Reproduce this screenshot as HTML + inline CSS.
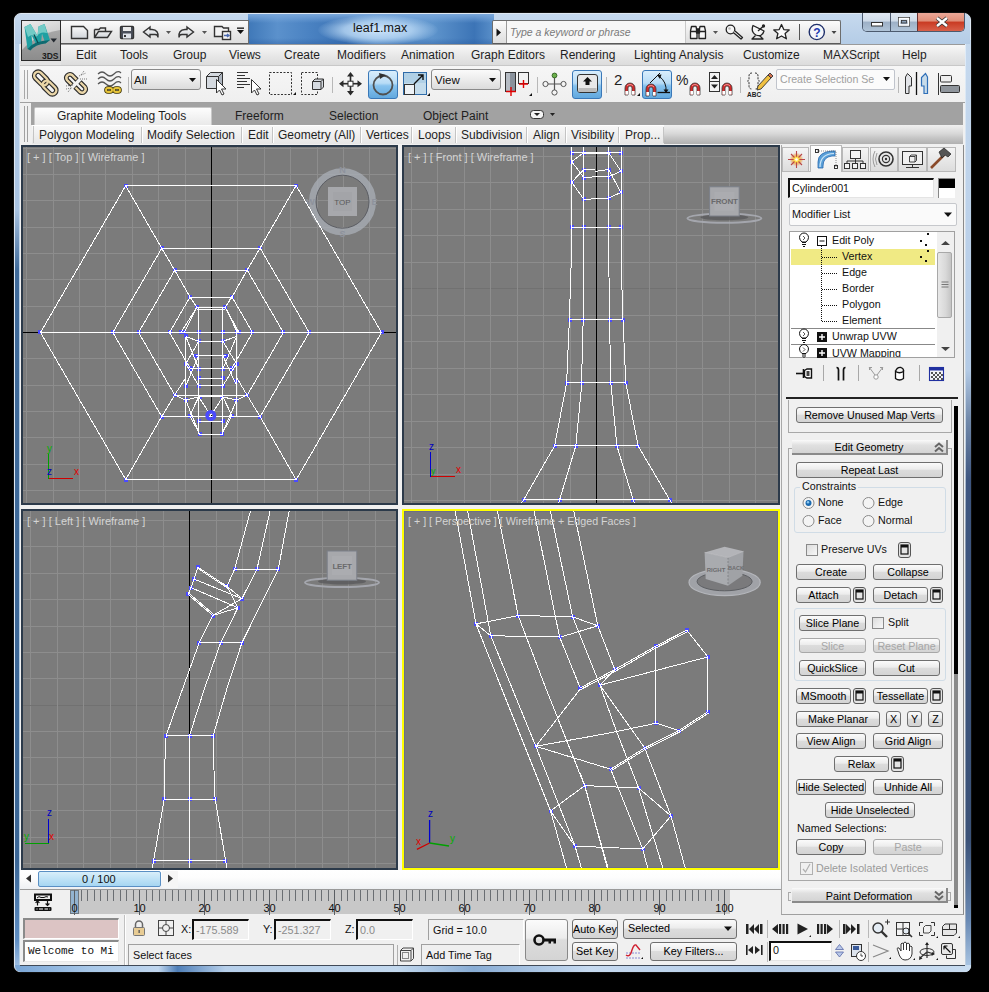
<!DOCTYPE html>
<html><head><meta charset="utf-8">
<style>
*{margin:0;padding:0;box-sizing:border-box}
html,body{width:989px;height:992px;overflow:hidden;background:#000;font-family:"Liberation Sans",sans-serif;font-size:12px;color:#1e1e1e}
.a{position:absolute}
svg.a{overflow:hidden}
#win{left:14px;top:13px;width:957px;height:959px;border-radius:7px 7px 6px 6px;background:#c4d8ee;border:1px solid #dfe8f2;box-shadow:0 0 0 0.5px #222}
#client{left:20px;top:44px;width:945px;height:921px;background:#f0f0f0}
.vp{background:#7b7b7b;border:2px solid #2c3a4a;overflow:hidden}
.vp.act{border:2px solid #ffff00}
.t{position:absolute;white-space:pre;line-height:1}
.btn{position:absolute;background:linear-gradient(#fbfbfb,#ececec 45%,#dcdcdc 50%,#d4d4d4);border:1px solid #6f6f6f;border-radius:3px;text-align:center;font-size:10.7px;color:#000;white-space:pre;line-height:14px}
.dis{color:#a6a6a6;border-color:#a8a8a8}
</style></head><body>
<div id="win" class="a"></div>
<div class="a" style="left:15px;top:40px;width:5px;height:926px;background:linear-gradient(#b9d0ea 0px,#a9c3e2 170px,#3f6a9a 230px,#3b6696 820px,#5f8ec4 900px,#9dbde2 926px)"></div>
<div class="a" style="left:19px;top:40px;width:1px;height:926px;background:linear-gradient(#e0ecf8,#b0c8e0 300px,#b8d0e4)"></div>
<div class="a" style="left:20px;top:44px;width:1px;height:921px;background:#2c3a4a"></div>
<div class="a" style="left:965px;top:40px;width:6px;height:926px;background:linear-gradient(#c6d9ee 0px,#b4cbe6 330px,#7189aa 380px,#3e5680 440px,#3b5278 800px,#6a8ab4 880px,#a8c4e2 926px)"></div>
<div class="a" style="left:965px;top:40px;width:1px;height:926px;background:linear-gradient(#e0ecf8,#c0d0e0 400px,#8a9ab0 500px,#8a9ab0 850px,#c0d0e0)"></div>
<div class="a" style="left:964px;top:44px;width:1px;height:921px;background:#404a58"></div>
<div class="a" style="left:15px;top:965px;width:956px;height:7px;border-radius:0 0 6px 6px;background:linear-gradient(90deg,#7aa6d6 0%,#a9c8e8 8%,#c0d6ee 15%,#4f7fb8 17%,#b6cfea 22%,#c2d8ee 40%,#88acd4 48%,#c6daf0 60%,#b4cce8 80%,#c8dcf0 100%)"></div>
<div class="a" style="left:20px;top:965px;width:945px;height:1px;background:#404a58"></div>
<div id="client" class="a"></div>
<!-- window frame detail -->
<div class="a" style="left:15px;top:14px;width:955px;height:30px;border-radius:6px 6px 0 0;background:linear-gradient(#c6d9ee,#b4cce6)"></div>
<!-- title glass area -->
<div class="a" style="left:248px;top:14px;width:246px;height:30px;background:linear-gradient(90deg,#3f78b8 0%,#5b91cc 12%,#4a82c2 25%,#3b72b4 40%,#6a9ed4 52%,#5e94cc 75%,#3c74b6 92%,#5a90ca 100%)"></div>
<div class="a" style="left:248px;top:14px;width:246px;height:30px;background:linear-gradient(#7aa8dc 0%,rgba(90,140,200,0) 30%,rgba(60,110,180,0) 80%,rgba(40,90,160,0.4) 100%)"></div>
<div class="a" style="left:318px;top:15px;width:120px;height:30px;border-radius:50%;background:radial-gradient(ellipse at center,rgba(205,228,250,1) 0%,rgba(180,212,242,0.85) 40%,rgba(120,170,220,0) 72%)"></div>
<div class="t" style="left:353px;top:22px;font-size:12.5px;color:#141414">leaf1.max</div>
<!-- logo -->
<div class="a" style="left:21px;top:20px;width:40px;height:41px;background:#2a2a2a"></div>
<svg class="a" style="left:22px;top:21px" width="38" height="39" viewBox="22 21 38 39">
<defs><linearGradient id="lg1" x1="0" y1="0" x2="0.3" y2="1"><stop offset="0" stop-color="#ececec"/><stop offset="0.5" stop-color="#d0d0d0"/><stop offset="1" stop-color="#b4b4b4"/></linearGradient>
<linearGradient id="lg2" x1="0" y1="0" x2="0" y2="1"><stop offset="0" stop-color="#a8a8a8"/><stop offset="1" stop-color="#8c8c8c"/></linearGradient></defs>
<rect x="22" y="21" width="38" height="39" fill="url(#lg1)"/>
<path d="M22 60 V50 Q36 34 60 30 V60 Z" fill="url(#lg2)"/>
<path d="M24.5 27 L30.5 24 L37.5 36 L38.5 26.5 L44.5 24 L50 40 L45.5 43.5 L42 34 L41 43 L36.5 45 L31.5 35 L32.5 46 L27.5 49 Z" fill="#1fa0a2"/>
<path d="M24.5 27 L30.5 24 L37.5 36 L38.5 26.5 L44.5 24 L47 33 Q40 31 36 37 L31.5 35 L28 37 Z" fill="#72cbc6"/>
<path d="M27.5 49 Q33 41 50 40 L45.5 43.5 Q36 44 30.5 50.5 Z" fill="#0f6a70"/>
<path d="M34 34.5 L38 43" stroke="#0b4a50" stroke-width="1.3"/>
<path d="M50.5 38.5 H57 L53.7 42.5 Z" fill="#22282f"/>
<text x="42" y="58.5" font-size="8.5" font-weight="bold" fill="#1c1c1c" font-family="Liberation Sans">3DS</text>
</svg>
<!-- quick access toolbar -->
<div class="a" style="left:61px;top:20px;width:188px;height:25px;background:linear-gradient(#fbfbfb,#eaeaea 50%,#dedede);border:1px solid #6d6d6d;border-left:none;border-bottom:2px solid #5a5a5a"></div>
<svg class="a" style="left:62px;top:21px" width="186" height="22" viewBox="62 21 186 22">
<defs><linearGradient id="qg" x1="0" y1="0" x2="0" y2="1"><stop offset="0" stop-color="#fafafa"/><stop offset="1" stop-color="#cfd3d8"/></linearGradient></defs>
<g fill="none" stroke="#333" stroke-width="1.4">
<path d="M71.5 26.5 H83.5 L87.5 30.5 V38.5 H71.5 Z" fill="url(#qg)"/>
<path d="M94.5 29.5 H99 L100.5 28 H105.5 V31.5" fill="#e8e8e8"/><path d="M94.5 29.5 V37.5 H107.5 L111.5 31.5 H98.5 L94.5 37.5" fill="url(#qg)"/>
<rect x="120.5" y="26.5" width="13" height="12" rx="1" fill="#4a4f5a"/><rect x="123" y="27" width="8" height="4" fill="#eaeaea" stroke="none"/><rect x="123" y="33.5" width="8" height="5" fill="#dfe3ea" stroke="none"/><rect x="124" y="35" width="2" height="2" fill="#333" stroke="none"/>
<path d="M150 27 L143.5 32 L150 37 V34.5 H155 Q158 34.5 158 37.5 Q159 30 152 29.5 H150 Z" fill="url(#qg)" stroke-width="1.4"/>
<path d="M187 27 L193.5 32 L187 37 V34.5 H182 Q179 34.5 179 37.5 Q178 30 185 29.5 H187 Z" fill="url(#qg)" stroke-width="1.4"/>
<path d="M214.5 26.5 H222 L223.5 28 H228.5 V36.5 H214.5 Z" fill="#f2f2f2"/><rect x="222.5" y="31.5" width="8" height="8" fill="#f4f4f4"/><path d="M224 35.5 H229 M227 34 L229 35.5 L227 37" stroke="#4a6ab0"/>
</g>
<g fill="#555"><path d="M166 31 h5 l-2.5 3z"/><path d="M202 31 h5 l-2.5 3z"/><path d="M237 30 h7 l-3.5 4z" fill="#111"/><rect x="237" y="27.5" width="7" height="1.3" fill="#111"/></g>
</svg>
<!-- InfoCenter -->
<div class="a" style="left:492px;top:20px;width:349px;height:25px;background:linear-gradient(#fbfbfb,#ececec 50%,#dedede);border:1px solid #6d6d6d;border-bottom:2px solid #5a5a5a;border-radius:2px 2px 0 0"></div>
<div class="a" style="left:506px;top:21px;width:180px;height:22px;background:#f7f7f7;border-left:1px solid #9a9a9a;border-right:1px solid #c8c8c8"></div>
<svg class="a" style="left:496px;top:28px" width="6" height="9"><path d="M0.5 0.5 L5 4.5 L0.5 8.5Z" fill="#111"/></svg>
<div class="t" style="left:510px;top:27px;font-size:10.5px;font-style:italic;color:#7a7a7a">Type a keyword or phrase</div>
<svg class="a" style="left:688px;top:21px" width="150" height="22" viewBox="688 21 150 22">
<g fill="#f6f6f6" stroke="#222" stroke-width="1.3" stroke-linejoin="round">
<path d="M690.5 31 L691.5 26.5 H696 L697 31 V38.5 H690.5 Z"/><path d="M699 31 L700 26.5 H704.5 L705.5 31 V38.5 H699 Z"/><rect x="696.5" y="29" width="3" height="4" fill="#222"/>
<path d="M690.8 31.5 H697 M699 31.5 H705.3" fill="none"/>
<circle cx="730.5" cy="29.5" r="4.3"/><path d="M733.3 32.5 L741 39 L742.5 37.5 L735 31" />
<circle cx="729.5" cy="28.5" r="1.3" fill="#bbb" stroke="none"/>
<path d="M753 25.5 Q750.5 32 756 35 Q762 37.5 764 31 Z"/><path d="M758 31 L763 26.5" fill="none"/><circle cx="763.5" cy="26" r="1" fill="#222"/><path d="M755.5 35.5 L752 39 H763 L759.5 35.5" fill="none"/>
<path d="M781.5 24.5 L783.8 29.6 L789.2 30 L785.1 33.5 L786.4 38.8 L781.5 36 L776.6 38.8 L777.9 33.5 L773.8 30 L779.2 29.6 Z" fill="#fbfbfb"/>
</g>
<path d="M713 31 h5 l-2.5 3z" fill="#555"/>
<line x1="799.5" y1="24" x2="799.5" y2="40" stroke="#555"/>
<circle cx="816.8" cy="32" r="7.6" fill="#f4f6fb" stroke="#1f2f6a" stroke-width="1.4"/>
<text x="816.8" y="36.5" font-size="12" font-weight="bold" fill="#1f3ab0" text-anchor="middle">?</text>
<path d="M831.5 31 h5 l-2.5 3z" fill="#444"/>
</svg>
<!-- window controls -->
<div class="a" style="left:862px;top:13px;width:103px;height:19px;border:1px solid #4c5a6e;border-top:none;border-radius:0 0 5px 5px;overflow:hidden">
 <div class="a" style="left:0;top:0;width:28px;height:18px;background:linear-gradient(#e0e8f2 0%,#cfdbe8 45%,#9db0c6 50%,#b0c4d8 100%);border-right:1px solid #4c5a6e"></div>
 <div class="a" style="left:28px;top:0;width:27px;height:18px;background:linear-gradient(#e0e8f2 0%,#cfdbe8 45%,#9db0c6 50%,#b0c4d8 100%);border-right:1px solid #6a3030"></div>
 <div class="a" style="left:55px;top:0;width:48px;height:18px;background:linear-gradient(#eba898 0%,#e08e78 45%,#c93a22 50%,#d8604a 100%)"></div>
</div>
<svg class="a" style="left:862px;top:13px" width="103" height="19" viewBox="862 13 103 19">
<rect x="871.5" y="22.5" width="11" height="3.5" fill="#fff" stroke="#333" stroke-width="1"/>
<rect x="898.5" y="17.5" width="11" height="8.5" fill="none" stroke="#333" stroke-width="1"/><rect x="899.5" y="18.5" width="9" height="6.5" fill="none" stroke="#fff" stroke-width="1.6"/><rect x="901.5" y="20.5" width="5" height="2.5" fill="#8aa0b8" stroke="#333" stroke-width="0.8"/>
<path d="M937 18 L947 26 M947 18 L937 26" stroke="#333" stroke-width="4"/><path d="M937 18 L947 26 M947 18 L937 26" stroke="#fff" stroke-width="2.4"/>
</svg>
<!-- menu bar -->
<div class="a" style="left:61px;top:44px;width:904px;height:21px;background:linear-gradient(#f8f8f8,#e6e6e6 60%,#dcdcdc);border-top:1px solid #9a9a9a"></div>
<div class="a" style="left:20px;top:61px;width:41px;height:4px;background:#e4e4e4"></div>
<div class="t" style="left:76px;top:49px">Edit</div>
<div class="t" style="left:120px;top:49px">Tools</div>
<div class="t" style="left:173px;top:49px">Group</div>
<div class="t" style="left:229px;top:49px">Views</div>
<div class="t" style="left:284px;top:49px">Create</div>
<div class="t" style="left:337px;top:49px">Modifiers</div>
<div class="t" style="left:401px;top:49px">Animation</div>
<div class="t" style="left:471px;top:49px">Graph Editors</div>
<div class="t" style="left:560px;top:49px">Rendering</div>
<div class="t" style="left:634px;top:49px">Lighting Analysis</div>
<div class="t" style="left:743px;top:49px">Customize</div>
<div class="t" style="left:823px;top:49px">MAXScript</div>
<div class="t" style="left:902px;top:49px">Help</div>
<div class="a" style="left:20px;top:65px;width:945px;height:38px;background:linear-gradient(#f6f6f6,#efefef);border-top:1px solid #c8c8c8;border-bottom:1px solid #a0a0a0"></div>
<div class="a" style="left:131px;top:69px;width:70px;height:21px;border:1px solid #8a8a8a;border-radius:3px;background:linear-gradient(#fafafa,#ececec 50%,#dcdcdc)"></div>
<div class="t" style="left:134px;top:75px;font-size:11.5px;color:#111">All</div>
<div class="a" style="left:431px;top:69px;width:70px;height:21px;border:1px solid #8a8a8a;border-radius:3px;background:linear-gradient(#fafafa,#ececec 50%,#dcdcdc)"></div>
<div class="t" style="left:435px;top:75px;font-size:11.5px;color:#111">View</div>
<div class="a" style="left:776px;top:69px;width:119px;height:21px;border:1px solid #c0c4cc;border-radius:2px;background:#fbfbfb"></div>
<div class="t" style="left:780px;top:74px;font-size:10.6px;color:#a0a0a0">Create Selection Se</div>
<div class="a" style="left:368px;top:70px;width:30px;height:29px;border:1px solid #3a78b8;border-radius:3px;background:linear-gradient(#d9eefc,#b8dcf6 45%,#86c2ee 55%,#62a8de)"></div>
<div class="a" style="left:572px;top:70px;width:30px;height:29px;border:1px solid #3a78b8;border-radius:3px;background:linear-gradient(#d9eefc,#b8dcf6 45%,#86c2ee 55%,#62a8de)"></div>
<div class="a" style="left:642px;top:70px;width:30px;height:29px;border:1px solid #3a78b8;border-radius:3px;background:linear-gradient(#d9eefc,#b8dcf6 45%,#86c2ee 55%,#62a8de)"></div>
<svg class="a" style="left:20px;top:65px" width="945" height="38" viewBox="20 65 945 38">
<g stroke="#a8a8a8"><line x1="24.5" y1="70" x2="24.5" y2="99"/><line x1="27.5" y1="70" x2="27.5" y2="99"/></g>
<g stroke="#b8b8b8"><line x1="128.5" y1="77" x2="128.5" y2="93"/><line x1="332.5" y1="77" x2="332.5" y2="93"/><line x1="537.5" y1="77" x2="537.5" y2="93"/><line x1="606.5" y1="77" x2="606.5" y2="93"/><line x1="740.5" y1="77" x2="740.5" y2="93"/><line x1="898.5" y1="77" x2="898.5" y2="93"/></g>
<!-- link -->
<g fill="none">
<g stroke="#2a2a2a" stroke-width="4.6"><rect x="33" y="74.5" width="16" height="8" rx="4" transform="rotate(45 41 78.5)"/><rect x="41.5" y="83.5" width="16" height="8" rx="4" transform="rotate(45 49.5 87.5)"/></g>
<g stroke="#ead6a8" stroke-width="2.4"><rect x="33" y="74.5" width="16" height="8" rx="4" transform="rotate(45 41 78.5)"/><rect x="41.5" y="83.5" width="16" height="8" rx="4" transform="rotate(45 49.5 87.5)"/></g>
<!-- unlink -->
<g stroke="#2a2a2a" stroke-width="4.6" stroke-linecap="butt"><path d="M77 80 L72 75 A3.6 3.6 0 0 0 67 80 L72 85"/><path d="M75 87 L80 92 A3.6 3.6 0 0 0 85 87 L80 82"/></g>
<g stroke="#ead6a8" stroke-width="2.4" stroke-linecap="butt"><path d="M76.5 79.5 L72 75 A3.6 3.6 0 0 0 67 80 L71.5 84.5"/><path d="M75.5 87.5 L80 92 A3.6 3.6 0 0 0 85 87 L80.5 82.5"/></g>
</g>
<g stroke="#444" stroke-width="0.7" stroke-dasharray="1 1"><path d="M79 76 L86 73 M80 79 L87 79 M81 75 L84 71 M66 86 L73 85 M66 89 L72 88 M68 92 L72 87"/></g>
<!-- bind spacewarp -->
<g fill="none" stroke="#555" stroke-width="1.2"><path d="M98 74 Q102 70 106 74 T114 74 T121 73"/><path d="M98 79 Q102 75 106 79 T114 79 T121 78"/><path d="M98 84 Q102 80 106 84 T114 84 T121 83"/></g>
<g fill="none" stroke="#3a3000" stroke-width="3.6"><rect x="106" y="88" width="6" height="4" rx="2"/><rect x="114" y="88" width="6" height="4" rx="2"/></g>
<g fill="none" stroke="#e5c33a" stroke-width="2"><rect x="106" y="88" width="6" height="4" rx="2"/><rect x="114" y="88" width="6" height="4" rx="2"/></g>
<!-- dropdown arrows -->
<g fill="#111"><path d="M189 78 h7 l-3.5 4z"/><path d="M489 78 h7 l-3.5 4z"/><path d="M883 77 h7 l-3.5 4z"/></g>
<!-- select object -->
<g stroke="#333" stroke-width="1" stroke-linejoin="round">
<path d="M206.5 76.5 L210.5 72.5 H222.5 V85.5 L218.5 88.5 H206.5 Z" fill="#d5dae0"/><path d="M206.5 76.5 H218.5 V88.5 M218.5 76.5 L222.5 72.5" fill="none"/><path d="M218.5 76.5 L222.5 72.5 V85.5 L218.5 88.5 Z" fill="#aeb6c0"/>
<path d="M216.5 79.5 V93 L219.5 90 L222 95 L224 94 L221.5 89 H226 Z" fill="#fff"/>
</g>
<!-- select by name -->
<g stroke="#333" stroke-width="1.2"><path d="M237 72.5 H248 M237 75.5 H245 M237 78.5 H250 M237 81.5 H247 M237 84.5 H250 M237 87.5 H244"/></g>
<path d="M251.5 79.5 V93 L254.5 90 L257 95 L259 94 L256.5 89 H261 Z" fill="#fff" stroke="#333" stroke-linejoin="round"/>
<!-- rect selection -->
<rect x="269.5" y="72.5" width="22" height="22" fill="none" stroke="#333" stroke-dasharray="2 1.5"/>
<path d="M293 95 h3 v-3z" fill="#111"/>
<!-- window crossing -->
<rect x="301.5" y="72.5" width="16" height="22" fill="none" stroke="#333" stroke-dasharray="2 1.5"/>
<g stroke="#333" stroke-linejoin="round"><path d="M312.5 81.5 L315 79 H323.5 V87 L321 89.5 H312.5 Z" fill="#d5dae0"/><path d="M312.5 81.5 H321 V89.5 M321 81.5 L323.5 79" fill="none"/></g>
<!-- move -->
<g fill="#2a2a2a"><path d="M350.5 72 L354 76.5 H347 Z M350.5 95.5 L354 91 H347 Z M339 83.7 L343.5 80.2 V87.2 Z M362 83.7 L357.5 80.2 V87.2 Z"/><rect x="349.7" y="76" width="1.6" height="15"/><rect x="343" y="82.9" width="15" height="1.6"/></g>
<rect x="348" y="81.2" width="5" height="5" fill="#fff" stroke="#2a2a2a"/>
<!-- rotate -->
<circle cx="383" cy="85" r="9.5" fill="none" stroke="#505050" stroke-width="1.8"/>
<path d="M379 73 L386 75 L380 79 Z" fill="#303030"/>
<!-- scale -->
<rect x="403.5" y="72.5" width="23" height="22" fill="#c4dcec" stroke="#2f6ba8"/>
<rect x="404" y="73" width="22" height="10" fill="#b0d0e6"/>
<rect x="404.5" y="84.5" width="10" height="10" fill="#eef2f6" stroke="#333"/>
<path d="M414 84 L423 75 M418 75 H423 V80" fill="none" stroke="#111" stroke-width="1.4"/>
<path d="M427 96 h3 v-3z" fill="#111"/>
<!-- pivot -->
<rect x="505.5" y="72.5" width="10" height="19" fill="#8a929c" stroke="#333"/><rect x="506" y="73" width="4" height="18" fill="#b6bcc4"/>
<rect x="518.5" y="72.5" width="10" height="11" fill="#f2f2f2" stroke="#333"/>
<g stroke="#e00000" stroke-width="1.4"><path d="M506 91.5 H516 M511 87 V96"/><path d="M519 84 H528 M523.5 80 V88"/></g>
<path d="M529 96 h3 v-3z" fill="#111"/>
<!-- manipulate -->
<g stroke="#555" stroke-width="1.2"><path d="M554.5 77 V92 M545 84 H564"/></g>
<circle cx="554.5" cy="75.5" r="2.4" fill="#6ab04a" stroke="#3a6a2a"/><g fill="#f4f4f4" stroke="#555"><circle cx="545.5" cy="84" r="2.6"/><circle cx="563.5" cy="84" r="2.6"/><circle cx="554.5" cy="92.5" r="2.6"/></g>
<!-- keyboard override -->
<rect x="577.5" y="74.5" width="20" height="18" rx="2.5" fill="#e8e8e8" stroke="#333"/><rect x="578.5" y="88" width="18" height="4" fill="#bcbcbc"/>
<path d="M587.5 77 L592 81.5 H589.5 V85 H585.5 V81.5 H583 Z" fill="#111"/>
<!-- snaps -->
<text x="614" y="85" font-size="15" fill="#222" font-family="Liberation Sans">2</text>
<path d="M625 95 V88 A5 5 0 0 1 635 88 V95 H632 V88 A2 2 0 0 0 628 88 V95 Z" fill="#d42a2a" stroke="#3a3a3a" stroke-width="0.8"/><path d="M627 86 A3.8 3.8 0 0 1 633 86" fill="none" stroke="#f4a0a0" stroke-width="0.9"/><rect x="625.4" y="91" width="2.6" height="3.6" fill="#fff"/><rect x="632" y="91" width="2.6" height="3.6" fill="#fff"/><path d="M646 96 V89 A5 5 0 0 1 656 89 V96 H653 V89 A2 2 0 0 0 649 89 V96 Z" fill="#d42a2a" stroke="#3a3a3a" stroke-width="0.8"/><path d="M648 87 A3.8 3.8 0 0 1 654 87" fill="none" stroke="#f4a0a0" stroke-width="0.9"/><rect x="646.4" y="92" width="2.6" height="3.6" fill="#fff"/><rect x="653" y="92" width="2.6" height="3.6" fill="#fff"/><path d="M690 95 V88 A5 5 0 0 1 700 88 V95 H697 V88 A2 2 0 0 0 693 88 V95 Z" fill="#d42a2a" stroke="#3a3a3a" stroke-width="0.8"/><path d="M692 86 A3.8 3.8 0 0 1 698 86" fill="none" stroke="#f4a0a0" stroke-width="0.9"/><rect x="690.4" y="91" width="2.6" height="3.6" fill="#fff"/><rect x="697" y="91" width="2.6" height="3.6" fill="#fff"/><path d="M722 95 V88 A5 5 0 0 1 732 88 V95 H729 V88 A2 2 0 0 0 725 88 V95 Z" fill="#d42a2a" stroke="#3a3a3a" stroke-width="0.8"/><path d="M724 86 A3.8 3.8 0 0 1 730 86" fill="none" stroke="#f4a0a0" stroke-width="0.9"/><rect x="722.4" y="91" width="2.6" height="3.6" fill="#fff"/><rect x="729" y="91" width="2.6" height="3.6" fill="#fff"/>
<path d="M637 96 h3 v-3z" fill="#111"/>
<path d="M650 83 L660 73" fill="none" stroke="#111" stroke-width="1"/><path d="M659 76 Q667 82 666 92" fill="none" stroke="#111" stroke-width="1"/><path d="M657.5 92.5 H670" stroke="#111" stroke-width="1.3"/><path d="M657 75 L661.5 74.5 L660 79Z M663.5 89.5 L666 93 L668.5 89.5Z" fill="#111"/>
<text x="676" y="85" font-size="14" fill="#222" font-family="Liberation Sans">%</text>
<rect x="709.5" y="72.5" width="10" height="19" fill="#f4f4f4" stroke="#333"/><path d="M711 79 L714.5 75 L718 79 Z M711 84.5 L714.5 88.5 L718 84.5 Z" fill="#222"/><line x1="710" y1="81.5" x2="719" y2="81.5" stroke="#333"/>
<!-- edit named sel -->
<path d="M752 73 Q749 73 749 76 V79 Q749 81 747.5 81 Q749 81 749 83 V86 Q749 89 752 89 M755 73 Q758 73 758 76 V79 Q758 81 759.5 81 Q758 81 758 83 V86 Q758 89 755 89" fill="none" stroke="#333" stroke-dasharray="2 1"/>
<path d="M758 86 L768 75 L771 78 L761 89 L757 90 Z" fill="#f0c040" stroke="#333" stroke-width="0.9"/><path d="M768 75 L770 73 L773 76 L771 78Z" fill="#d07050" stroke="#333" stroke-width="0.9"/>
<text x="747" y="97" font-size="6.5" font-weight="bold" fill="#222" font-family="Liberation Sans">ABC</text>
<!-- mirror -->
<path d="M905.5 77 L907.5 73.5 L911.5 77.5 V86 H909 V93.5 H905.5 Z" fill="#e2e4e8" stroke="#333"/>
<line x1="916.5" y1="72" x2="916.5" y2="95" stroke="#111" stroke-width="1.3"/>
<path d="M927.5 77 L925.5 73.5 L921.5 77.5 V86 H924 V93.5 H927.5 Z" fill="#c8dcea" stroke="#2f6fb8" stroke-width="1.2"/>
<!-- align -->
<line x1="938.5" y1="73" x2="938.5" y2="95" stroke="#333"/><rect x="940.5" y="75.5" width="11" height="6.5" rx="1" fill="#eeeeee" stroke="#333"/><rect x="940.5" y="85.5" width="19" height="7" rx="1" fill="#8f959c" stroke="#333"/>
</svg>
<div class="a" style="left:20px;top:103px;width:945px;height:42px;background:#f0f0f0"></div>
<div class="a" style="left:31px;top:103px;width:932px;height:22px;background:#a2a2a2"></div>
<div class="a" style="left:34px;top:107px;width:178px;height:19px;background:linear-gradient(#fdfdfd,#e8e8e8);border:1px solid #c8c8c8;border-bottom:none;border-radius:2px 2px 0 0"></div>
<div class="t" style="left:57px;top:110px">Graphite Modeling Tools</div>
<div class="t" style="left:235px;top:110px">Freeform</div>
<div class="t" style="left:329px;top:110px">Selection</div>
<div class="t" style="left:423px;top:110px">Object Paint</div>
<svg class="a" style="left:528px;top:108px" width="30" height="14" viewBox="0 0 30 14">
<rect x="2.5" y="2.5" width="13" height="8" rx="3" fill="#f4f4f4" stroke="#333"/><path d="M6 5 h6 l-3 3z" fill="#222"/><path d="M22 5 h5 l-2.5 3z" fill="#222"/>
</svg>
<div class="a" style="left:32px;top:125px;width:931px;height:19px;background:linear-gradient(#f8f8f8,#e6e6e6);border-top:1px solid #fff"></div>
<div class="a" style="left:664px;top:125px;width:299px;height:19px;background:linear-gradient(#f0f0f0,#d8d8d8 45%,#c4c4c4 70%,#b0b0b0)"></div>
<svg class="a" style="left:20px;top:103px" width="945" height="42" viewBox="20 103 945 42">
<g stroke="#a0a0a0"><line x1="24.5" y1="106" x2="24.5" y2="142"/><line x1="27.5" y1="106" x2="27.5" y2="142"/></g>
<g stroke="#c4c4c4"><line x1="33.5" y1="126" x2="33.5" y2="143"/><line x1="141.5" y1="127" x2="141.5" y2="143"/><line x1="241.5" y1="127" x2="241.5" y2="143"/><line x1="272.5" y1="127" x2="272.5" y2="143"/><line x1="360.5" y1="127" x2="360.5" y2="143"/><line x1="411.5" y1="127" x2="411.5" y2="143"/><line x1="455.5" y1="127" x2="455.5" y2="143"/><line x1="526.5" y1="127" x2="526.5" y2="143"/><line x1="565.5" y1="127" x2="565.5" y2="143"/><line x1="618.5" y1="127" x2="618.5" y2="143"/><line x1="663.5" y1="127" x2="663.5" y2="143"/></g>
<g stroke="#fff"><line x1="142.5" y1="127" x2="142.5" y2="143"/><line x1="242.5" y1="127" x2="242.5" y2="143"/><line x1="273.5" y1="127" x2="273.5" y2="143"/><line x1="361.5" y1="127" x2="361.5" y2="143"/><line x1="412.5" y1="127" x2="412.5" y2="143"/><line x1="456.5" y1="127" x2="456.5" y2="143"/><line x1="527.5" y1="127" x2="527.5" y2="143"/><line x1="566.5" y1="127" x2="566.5" y2="143"/><line x1="619.5" y1="127" x2="619.5" y2="143"/></g>
</svg>
<div class="t" style="left:39px;top:129px">Polygon Modeling</div>
<div class="t" style="left:147px;top:129px">Modify Selection</div>
<div class="t" style="left:248px;top:129px">Edit</div>
<div class="t" style="left:278px;top:129px">Geometry (All)</div>
<div class="t" style="left:366px;top:129px">Vertices</div>
<div class="t" style="left:418px;top:129px">Loops</div>
<div class="t" style="left:461px;top:129px">Subdivision</div>
<div class="t" style="left:533px;top:129px">Align</div>
<div class="t" style="left:571px;top:129px">Visibility</div>
<div class="t" style="left:625px;top:129px">Prop...</div>
<div class="a vp" style="left:21px;top:145px;width:377px;height:360px"></div><div class="a vp" style="left:402px;top:145px;width:378px;height:360px"></div><div class="a vp" style="left:21px;top:509px;width:377px;height:361px"></div><div class="a vp act" style="left:402px;top:509px;width:378px;height:361px"></div><svg class="a" style="left:23px;top:147px" width="373" height="356" viewBox="23 147 373 356"><rect x="23" y="147" width="373" height="356" fill="#7b7b7b"/><g stroke="#8d8d8d" stroke-width="1" shape-rendering="crispEdges"><line x1="26.5" y1="147" x2="26.5" y2="503"/><line x1="23" y1="148.5" x2="396" y2="148.5"/><line x1="53.5" y1="147" x2="53.5" y2="503"/><line x1="23" y1="174.5" x2="396" y2="174.5"/><line x1="79.5" y1="147" x2="79.5" y2="503"/><line x1="23" y1="200.5" x2="396" y2="200.5"/><line x1="105.5" y1="147" x2="105.5" y2="503"/><line x1="23" y1="227.5" x2="396" y2="227.5"/><line x1="132.5" y1="147" x2="132.5" y2="503"/><line x1="23" y1="253.5" x2="396" y2="253.5"/><line x1="158.5" y1="147" x2="158.5" y2="503"/><line x1="23" y1="279.5" x2="396" y2="279.5"/><line x1="185.5" y1="147" x2="185.5" y2="503"/><line x1="23" y1="306.5" x2="396" y2="306.5"/><line x1="211.5" y1="147" x2="211.5" y2="503"/><line x1="23" y1="332.5" x2="396" y2="332.5"/><line x1="237.5" y1="147" x2="237.5" y2="503"/><line x1="23" y1="358.5" x2="396" y2="358.5"/><line x1="264.5" y1="147" x2="264.5" y2="503"/><line x1="23" y1="385.5" x2="396" y2="385.5"/><line x1="290.5" y1="147" x2="290.5" y2="503"/><line x1="23" y1="411.5" x2="396" y2="411.5"/><line x1="317.5" y1="147" x2="317.5" y2="503"/><line x1="23" y1="437.5" x2="396" y2="437.5"/><line x1="343.5" y1="147" x2="343.5" y2="503"/><line x1="23" y1="464.5" x2="396" y2="464.5"/><line x1="369.5" y1="147" x2="369.5" y2="503"/><line x1="23" y1="490.5" x2="396" y2="490.5"/></g><g stroke="#000" stroke-width="1.2" shape-rendering="crispEdges"><line x1="211.5" y1="147" x2="211.5" y2="503"/><line x1="23" y1="332.5" x2="396" y2="332.5"/></g><circle cx="342.5" cy="201.7" r="30" fill="none" stroke="#a8acb4" stroke-width="7" opacity="0.8"/><circle cx="342.5" cy="201.7" r="26.5" fill="none" stroke="#5c5e64" stroke-width="1"/><rect x="328" y="187" width="29" height="29" fill="#a7a8ac"/><rect x="333" y="192" width="19" height="19" fill="#a3a4a8"/><text x="342.5" y="205" font-size="8" fill="#5a5a5a" text-anchor="middle">TOP</text><g font-size="9" font-weight="bold" fill="#8e929c" text-anchor="middle"><text x="342.5" y="173">N</text><text x="342.5" y="237">S</text><text x="310.5" y="205">W</text><text x="374.5" y="205">E</text></g><g fill="#4a4aff" shape-rendering="crispEdges"><rect x="124" y="184" width="4" height="4"/><rect x="294" y="184" width="4" height="4"/><rect x="380" y="330" width="4" height="4"/><rect x="294" y="478" width="4" height="4"/><rect x="124" y="478" width="4" height="4"/><rect x="38" y="330" width="4" height="4"/><rect x="160" y="246" width="4" height="4"/><rect x="258" y="246" width="4" height="4"/><rect x="307" y="330" width="4" height="4"/><rect x="258" y="415" width="4" height="4"/><rect x="160" y="415" width="4" height="4"/><rect x="111" y="330" width="4" height="4"/><rect x="173" y="268" width="4" height="4"/><rect x="245" y="268" width="4" height="4"/><rect x="281" y="330" width="4" height="4"/><rect x="245" y="393" width="4" height="4"/><rect x="173" y="393" width="4" height="4"/><rect x="137" y="330" width="4" height="4"/><rect x="188" y="295" width="4" height="4"/><rect x="230" y="295" width="4" height="4"/><rect x="250" y="330" width="4" height="4"/><rect x="230" y="366" width="4" height="4"/><rect x="188" y="366" width="4" height="4"/><rect x="168" y="330" width="4" height="4"/><rect x="195" y="305" width="4" height="4"/><rect x="223" y="305" width="4" height="4"/><rect x="179" y="330" width="4" height="4"/><rect x="182" y="330" width="4" height="4"/><rect x="197" y="330" width="4" height="4"/><rect x="221" y="330" width="4" height="4"/><rect x="235" y="330" width="4" height="4"/><rect x="237" y="330" width="4" height="4"/><rect x="184" y="334" width="4" height="4"/><rect x="197" y="339" width="4" height="4"/><rect x="221" y="339" width="4" height="4"/><rect x="194" y="354" width="4" height="4"/><rect x="224" y="354" width="4" height="4"/><rect x="184" y="362" width="4" height="4"/><rect x="235" y="362" width="4" height="4"/><rect x="189" y="367" width="4" height="4"/><rect x="197" y="367" width="4" height="4"/><rect x="221" y="367" width="4" height="4"/><rect x="230" y="367" width="4" height="4"/><rect x="197" y="376" width="4" height="4"/><rect x="221" y="376" width="4" height="4"/><rect x="234" y="379" width="4" height="4"/><rect x="184" y="384" width="4" height="4"/><rect x="197" y="384" width="4" height="4"/><rect x="221" y="384" width="4" height="4"/><rect x="198" y="395" width="4" height="4"/><rect x="220" y="395" width="4" height="4"/><rect x="184" y="398" width="4" height="4"/><rect x="234" y="398" width="4" height="4"/><rect x="188" y="414" width="4" height="4"/><rect x="230" y="414" width="4" height="4"/><rect x="197" y="419" width="4" height="4"/><rect x="221" y="419" width="4" height="4"/><rect x="198" y="432" width="4" height="4"/><rect x="220" y="432" width="4" height="4"/></g><polygon points="125.7,185.7 296.3,185.7 381.5,332.5 296.3,479.5 125.7,479.5 40.5,332.5" fill="none" stroke="#fff" stroke-width="1" shape-rendering="crispEdges"/><polygon points="161.8,248.2 260.2,248.2 309.2,332.5 260.2,416.6 161.8,416.6 112.8,332.5" fill="none" stroke="#fff" stroke-width="1" shape-rendering="crispEdges"/><polygon points="174.7,270.3 247.3,270.3 283.4,332.5 247.3,395 174.7,395 138.6,332.5" fill="none" stroke="#fff" stroke-width="1" shape-rendering="crispEdges"/><polygon points="190,297 232,297 252.5,332.5 232,368.0 190,368.0 169.5,332.5" fill="none" stroke="#fff" stroke-width="1" shape-rendering="crispEdges"/><g stroke="#fff" stroke-width="1" shape-rendering="crispEdges"><line x1="40.6" y1="332.5" x2="381" y2="332.5"/></g><polyline points="125.7,185.7 161.7,248.2 174.7,270.3 189.8,296.6 196.8,307.4" fill="none" stroke="#fff" stroke-width="1" shape-rendering="crispEdges"/><polyline points="296,185.7 260,248.2 247,270.3 232,297 225.3,307.4" fill="none" stroke="#fff" stroke-width="1" shape-rendering="crispEdges"/><polyline points="125.7,479.5 161.7,416.6 174.7,395 185.8,377.6" fill="none" stroke="#fff" stroke-width="1" shape-rendering="crispEdges"/><polyline points="296,479.5 260,416.6 247,395 236.6,377.6" fill="none" stroke="#fff" stroke-width="1" shape-rendering="crispEdges"/><g stroke="#fff" stroke-width="1" shape-rendering="crispEdges"><line x1="196.8" y1="307.4" x2="225.3" y2="307.4"/><line x1="196.8" y1="309" x2="225.3" y2="309"/><line x1="189.8" y1="296.6" x2="196.8" y2="307.4"/><line x1="231.8" y1="296.6" x2="225.3" y2="307.4"/><line x1="196.8" y1="307.4" x2="184.2" y2="332.4"/><line x1="225.3" y1="307.4" x2="237.4" y2="332.4"/><line x1="196.8" y1="307.4" x2="181" y2="332.4"/><line x1="225.3" y1="307.4" x2="239" y2="332.4"/><line x1="198.7" y1="307.4" x2="198.7" y2="434"/><line x1="222.9" y1="307.4" x2="222.9" y2="434"/><line x1="185.8" y1="336.5" x2="185.8" y2="415.5"/><line x1="236.6" y1="332.4" x2="236.6" y2="415.5"/><line x1="198.7" y1="341.3" x2="222.9" y2="341.3"/><line x1="198.7" y1="355.8" x2="222.9" y2="355.8"/><line x1="198.7" y1="368.7" x2="222.9" y2="368.7"/><line x1="198.7" y1="378.4" x2="222.9" y2="378.4"/><line x1="198.7" y1="385.6" x2="222.9" y2="385.6"/><line x1="198.7" y1="396.9" x2="222.9" y2="396.9"/><line x1="198.7" y1="421" x2="222.9" y2="421"/><line x1="198.7" y1="434" x2="222.9" y2="434"/><line x1="195.5" y1="355.8" x2="226.1" y2="355.8"/><line x1="185.8" y1="336.5" x2="198.7" y2="341.3"/><line x1="236.6" y1="336.5" x2="222.9" y2="341.3"/><line x1="185.8" y1="336.5" x2="198.7" y2="368.7"/><line x1="236.6" y1="336.5" x2="222.9" y2="368.7"/><line x1="185.8" y1="363.9" x2="198.7" y2="341.3"/><line x1="236.6" y1="363.9" x2="222.9" y2="341.3"/><line x1="185.8" y1="363.9" x2="198.7" y2="385.6"/><line x1="236.6" y1="363.9" x2="222.9" y2="385.6"/><line x1="185.8" y1="385.6" x2="198.7" y2="355.8"/><line x1="236.6" y1="385.6" x2="222.9" y2="355.8"/><line x1="185.8" y1="400.2" x2="198.7" y2="396.9"/><line x1="236.6" y1="400.2" x2="222.9" y2="396.9"/><line x1="185.8" y1="400.2" x2="199.5" y2="434"/><line x1="236.6" y1="400.2" x2="222" y2="434"/><line x1="189.8" y1="415.5" x2="198.7" y2="396.9"/><line x1="231.8" y1="415.5" x2="222.9" y2="396.9"/><line x1="189.8" y1="415.5" x2="199.5" y2="434"/><line x1="231.8" y1="415.5" x2="222" y2="434"/><line x1="174.8" y1="394.8" x2="185.8" y2="400.2"/><line x1="247.1" y1="394.8" x2="236.6" y2="400.2"/><line x1="198.7" y1="396.9" x2="210.8" y2="415.5"/><line x1="222.9" y1="396.9" x2="210.8" y2="415.5"/></g><circle cx="210.8" cy="415.5" r="3.8" fill="none" stroke="#4a4aff" stroke-width="3.4"/><g stroke-width="1.3" shape-rendering="crispEdges"><line x1="48.5" y1="454" x2="48.5" y2="479" stroke="#00a000"/><line x1="48.5" y1="478.6" x2="73" y2="478.6" stroke="#d00000"/></g><text x="47" y="452" font-size="10" fill="#00b000">y</text><text x="47" y="475" font-size="10" fill="#0000c0">z</text><text x="74" y="475" font-size="10" fill="#e00000">x</text><text x="27" y="161" font-size="11" fill="#d4d4d4" style="white-space:pre">[ + ] [ Top ] [ Wireframe ]</text></svg><svg class="a" style="left:404px;top:147px" width="374" height="356" viewBox="404 147 374 356"><rect x="404" y="147" width="374" height="356" fill="#7b7b7b"/><g stroke="#8d8d8d" stroke-width="1" shape-rendering="crispEdges"><line x1="404" y1="156.5" x2="778" y2="156.5"/><line x1="404" y1="182.5" x2="778" y2="182.5"/><line x1="404" y1="209.5" x2="778" y2="209.5"/><line x1="404" y1="235.5" x2="778" y2="235.5"/><line x1="404" y1="262.5" x2="778" y2="262.5"/><line x1="404" y1="288.5" x2="778" y2="288.5" stroke="#717171"/><line x1="411.5" y1="147" x2="411.5" y2="503"/><line x1="404" y1="315.5" x2="778" y2="315.5"/><line x1="437.5" y1="147" x2="437.5" y2="503"/><line x1="404" y1="341.5" x2="778" y2="341.5"/><line x1="464.5" y1="147" x2="464.5" y2="503"/><line x1="404" y1="368.5" x2="778" y2="368.5"/><line x1="490.5" y1="147" x2="490.5" y2="503"/><line x1="404" y1="394.5" x2="778" y2="394.5"/><line x1="517.5" y1="147" x2="517.5" y2="503"/><line x1="404" y1="421.5" x2="778" y2="421.5"/><line x1="543.5" y1="147" x2="543.5" y2="503"/><line x1="404" y1="447.5" x2="778" y2="447.5"/><line x1="570.5" y1="147" x2="570.5" y2="503"/><line x1="404" y1="474.5" x2="778" y2="474.5"/><line x1="596.5" y1="147" x2="596.5" y2="503"/><line x1="404" y1="500.5" x2="778" y2="500.5"/><line x1="623.5" y1="147" x2="623.5" y2="503"/><line x1="649.5" y1="147" x2="649.5" y2="503"/><line x1="676.5" y1="147" x2="676.5" y2="503"/><line x1="702.5" y1="147" x2="702.5" y2="503"/><line x1="729.5" y1="147" x2="729.5" y2="503"/><line x1="755.5" y1="147" x2="755.5" y2="503"/></g><g stroke="#000" stroke-width="1.2" shape-rendering="crispEdges"><line x1="596.5" y1="147" x2="596.5" y2="503"/></g><g fill="#4a4aff" shape-rendering="crispEdges"><rect x="570" y="151" width="4" height="4"/><rect x="582" y="151" width="4" height="4"/><rect x="607" y="151" width="4" height="4"/><rect x="619" y="151" width="4" height="4"/><rect x="570" y="160" width="4" height="4"/><rect x="582" y="168" width="4" height="4"/><rect x="607" y="168" width="4" height="4"/><rect x="619" y="169" width="4" height="4"/><rect x="570" y="180" width="4" height="4"/><rect x="582" y="176" width="4" height="4"/><rect x="607" y="175" width="4" height="4"/><rect x="619" y="190" width="4" height="4"/><rect x="582" y="197" width="4" height="4"/><rect x="607" y="196" width="4" height="4"/><rect x="570" y="225" width="4" height="4"/><rect x="582" y="225" width="4" height="4"/><rect x="607" y="225" width="4" height="4"/><rect x="619" y="225" width="4" height="4"/><rect x="568" y="318" width="4" height="4"/><rect x="581" y="318" width="4" height="4"/><rect x="608" y="318" width="4" height="4"/><rect x="621" y="318" width="4" height="4"/><rect x="565" y="381" width="4" height="4"/><rect x="580" y="381" width="4" height="4"/><rect x="609" y="381" width="4" height="4"/><rect x="624" y="381" width="4" height="4"/><rect x="553" y="444" width="4" height="4"/><rect x="574" y="444" width="4" height="4"/><rect x="615" y="444" width="4" height="4"/><rect x="636" y="444" width="4" height="4"/><rect x="522" y="498" width="4" height="4"/><rect x="558" y="498" width="4" height="4"/><rect x="631" y="498" width="4" height="4"/><rect x="668" y="498" width="4" height="4"/></g><polyline points="571.7,147 571.7,227 571.2,263 569.9,302.8 569.4,319.7 567.7,356.5 566.7,382.8 554.6,445.9 523.9,499.5 520,505" fill="none" stroke="#fff" stroke-width="1" shape-rendering="crispEdges"/><polyline points="583.9,147 583.9,242 583.2,319.7 581.9,368.6 581.9,382.8 575.8,445.9 559.7,499.5 558,505" fill="none" stroke="#fff" stroke-width="1" shape-rendering="crispEdges"/><polyline points="608.6,147 608.6,242 609.5,319.7 610.8,382.8 616.9,445.9 633.1,499.5 635,505" fill="none" stroke="#fff" stroke-width="1" shape-rendering="crispEdges"/><polyline points="621,147 621,263 622.5,302.8 623,319.7 625.8,382.8 638.1,445.9 669.5,499.5 673,505" fill="none" stroke="#fff" stroke-width="1" shape-rendering="crispEdges"/><g stroke="#fff" stroke-width="1" shape-rendering="crispEdges"><line x1="571.7" y1="152.6" x2="621" y2="152.6"/><line x1="571.7" y1="227" x2="621" y2="227"/><line x1="569.6" y1="319.7" x2="623" y2="319.7"/><line x1="566.7" y1="382.8" x2="625.8" y2="382.8"/><line x1="554.6" y1="445.9" x2="638.1" y2="445.9"/><line x1="523.9" y1="499.5" x2="669.5" y2="499.5"/><line x1="583.9" y1="152.6" x2="571.7" y2="161.7"/><line x1="571.7" y1="161.7" x2="583.9" y2="177.6"/><line x1="571.7" y1="182.2" x2="583.9" y2="169.5"/><line x1="571.7" y1="182.2" x2="583.9" y2="199.4"/><line x1="583.9" y1="169.5" x2="595" y2="170"/><line x1="595" y1="171.5" x2="608.6" y2="169.5"/><line x1="583.9" y1="177.6" x2="596" y2="176.7"/><line x1="596" y1="176.7" x2="608.6" y2="176.7"/><line x1="583.9" y1="199.4" x2="608.6" y2="198"/><line x1="608.6" y1="152.6" x2="621" y2="171.3"/><line x1="608.6" y1="176.7" x2="621" y2="171.3"/><line x1="608.6" y1="169.5" x2="621" y2="192.5"/><line x1="608.6" y1="198" x2="621" y2="192.5"/><line x1="583" y1="153.5" x2="608" y2="153.5"/></g><g stroke-width="1.3" shape-rendering="crispEdges"><line x1="430.5" y1="452" x2="430.5" y2="477" stroke="#0000d0"/><line x1="430.5" y1="476.6" x2="455" y2="476.6" stroke="#d00000"/></g><text x="429" y="450" font-size="10" fill="#0000c0">z</text><text x="456" y="473" font-size="10" fill="#e00000">x</text><text x="431" y="474" font-size="9" fill="#00b000">y</text><ellipse cx="724.4" cy="218.3" rx="37" ry="4.5" fill="none" stroke="#a9abb2" stroke-width="2" opacity="0.9"/><ellipse cx="724.4" cy="217.3" rx="24" ry="3" fill="#5a5a5c" opacity="0.8"/><rect x="709.6" y="186.8" width="29.6" height="29.2" fill="#a7a8ac" stroke="#7c808a" stroke-width="1"/><rect x="714.4" y="191.8" width="20" height="19" fill="#abacb0"/><text x="724.4" y="204.3" font-size="8" font-weight="bold" fill="#6a6a6c" text-anchor="middle" letter-spacing="-0.2">FRONT</text><text x="408" y="161" font-size="11" fill="#d4d4d4" style="white-space:pre">[ + ] [ Front ] [ Wireframe ]</text></svg><svg class="a" style="left:23px;top:511px" width="373" height="357" viewBox="23 511 373 357"><rect x="23" y="511" width="373" height="357" fill="#7b7b7b"/><g stroke="#8d8d8d" stroke-width="1" shape-rendering="crispEdges"><line x1="23" y1="520.5" x2="396" y2="520.5"/><line x1="23" y1="546.5" x2="396" y2="546.5"/><line x1="23" y1="573.5" x2="396" y2="573.5"/><line x1="23" y1="599.5" x2="396" y2="599.5"/><line x1="23" y1="626.5" x2="396" y2="626.5"/><line x1="23" y1="652.5" x2="396" y2="652.5"/><line x1="23" y1="678.5" x2="396" y2="678.5"/><line x1="30.5" y1="511" x2="30.5" y2="868"/><line x1="23" y1="705.5" x2="396" y2="705.5" stroke="#717171"/><line x1="57.5" y1="511" x2="57.5" y2="868"/><line x1="23" y1="731.5" x2="396" y2="731.5"/><line x1="83.5" y1="511" x2="83.5" y2="868"/><line x1="23" y1="757.5" x2="396" y2="757.5"/><line x1="110.5" y1="511" x2="110.5" y2="868"/><line x1="23" y1="784.5" x2="396" y2="784.5"/><line x1="136.5" y1="511" x2="136.5" y2="868"/><line x1="23" y1="810.5" x2="396" y2="810.5"/><line x1="163.5" y1="511" x2="163.5" y2="868"/><line x1="23" y1="837.5" x2="396" y2="837.5"/><line x1="189.5" y1="511" x2="189.5" y2="868"/><line x1="23" y1="863.5" x2="396" y2="863.5"/><line x1="216.5" y1="511" x2="216.5" y2="868"/><line x1="242.5" y1="511" x2="242.5" y2="868"/><line x1="269.5" y1="511" x2="269.5" y2="868"/><line x1="295.5" y1="511" x2="295.5" y2="868"/><line x1="322.5" y1="511" x2="322.5" y2="868"/><line x1="348.5" y1="511" x2="348.5" y2="868"/><line x1="375.5" y1="511" x2="375.5" y2="868"/></g><g stroke="#000" stroke-width="1.2" shape-rendering="crispEdges"><line x1="189.5" y1="511" x2="189.5" y2="735"/></g><g fill="#4a4aff" shape-rendering="crispEdges"><rect x="233" y="567" width="4" height="4"/><rect x="255" y="567" width="4" height="4"/><rect x="276" y="567" width="4" height="4"/><rect x="196" y="565" width="4" height="4"/><rect x="192" y="577" width="4" height="4"/><rect x="189" y="586" width="4" height="4"/><rect x="186" y="592" width="4" height="4"/><rect x="225" y="584" width="4" height="4"/><rect x="240" y="597" width="4" height="4"/><rect x="236" y="606" width="4" height="4"/><rect x="211" y="614" width="4" height="4"/><rect x="197" y="641" width="4" height="4"/><rect x="219" y="641" width="4" height="4"/><rect x="240" y="641" width="4" height="4"/><rect x="164" y="734" width="4" height="4"/><rect x="188" y="734" width="4" height="4"/><rect x="211" y="734" width="4" height="4"/><rect x="162" y="797" width="4" height="4"/><rect x="188" y="797" width="4" height="4"/><rect x="213" y="797" width="4" height="4"/><rect x="152" y="859" width="4" height="4"/><rect x="188" y="859" width="4" height="4"/><rect x="223" y="859" width="4" height="4"/></g><polyline points="251,509 234.6,569.1 227,586.4" fill="none" stroke="#fff" stroke-width="1" shape-rendering="crispEdges"/><polyline points="270.5,509 257,569.1 241.9,598.6" fill="none" stroke="#fff" stroke-width="1" shape-rendering="crispEdges"/><polyline points="289.5,509 278.3,569.1 241.9,642.8 227,688.3 213.2,735.6 214.5,791.2 215.2,798.8 225.8,862 227,870" fill="none" stroke="#fff" stroke-width="1" shape-rendering="crispEdges"/><polyline points="237.9,607.8 220.6,642.8 204.6,688.3 189.5,735.6 189.5,870" fill="none" stroke="#fff" stroke-width="1" shape-rendering="crispEdges"/><polyline points="212.8,615.5 199.2,642.8 182.8,688.3 166.1,735.7 164.5,770 164.2,799.1 153.6,860.6 152,870" fill="none" stroke="#fff" stroke-width="1" shape-rendering="crispEdges"/><g stroke="#fff" stroke-width="1" shape-rendering="crispEdges"><line x1="234.6" y1="569.1" x2="278.3" y2="569.1"/><line x1="199.2" y1="642.8" x2="241.9" y2="642.8"/><line x1="166.1" y1="735.7" x2="213.2" y2="735.7"/><line x1="164.2" y1="799.1" x2="215.2" y2="799.1"/><line x1="153.6" y1="860.6" x2="225" y2="860.6"/><line x1="197.9" y1="567.2" x2="227" y2="586.4"/><line x1="197.9" y1="568.5" x2="227" y2="587.7"/><line x1="194.1" y1="579.1" x2="241.9" y2="598.6"/><line x1="191" y1="587.6" x2="237.9" y2="607.8"/><line x1="188.2" y1="594.5" x2="212.8" y2="615.5"/><line x1="189.2" y1="593.5" x2="213.8" y2="614.5"/><line x1="227" y1="586.4" x2="241.9" y2="598.6"/><line x1="227" y1="586.4" x2="237.9" y2="607.8"/><line x1="212.8" y1="615.5" x2="241.9" y2="598.6"/><line x1="212.8" y1="615.5" x2="237.9" y2="607.8"/></g><polyline points="197.9,567.2 194.1,579.1 191,587.6 188.2,594.5" fill="none" stroke="#fff" stroke-width="1" shape-rendering="crispEdges"/><g stroke-width="1.3" shape-rendering="crispEdges"><line x1="48.3" y1="819" x2="48.3" y2="844" stroke="#0000d0"/><line x1="25" y1="843.3" x2="49" y2="843.3" stroke="#00a000"/></g><text x="47" y="816" font-size="10" fill="#0000c0">z</text><text x="24" y="840" font-size="10" fill="#00b000">y</text><text x="49" y="840" font-size="10" fill="#e00000">x</text><ellipse cx="342" cy="582.5" rx="37" ry="4.5" fill="none" stroke="#a9abb2" stroke-width="2" opacity="0.9"/><ellipse cx="342" cy="581.5" rx="24" ry="3" fill="#5a5a5c" opacity="0.8"/><rect x="327.2" y="551" width="29.6" height="29.2" fill="#a7a8ac" stroke="#7c808a" stroke-width="1"/><rect x="332" y="556" width="20" height="19" fill="#abacb0"/><text x="342" y="568.5" font-size="8" font-weight="bold" fill="#6a6a6c" text-anchor="middle" letter-spacing="-0.2">LEFT</text><text x="27" y="525" font-size="11" fill="#d4d4d4" style="white-space:pre">[ + ] [ Left ] [ Wireframe ]</text></svg><svg class="a" style="left:404px;top:511px" width="374" height="357" viewBox="404 511 374 357"><rect x="404" y="511" width="374" height="357" fill="#7b7b7b"/><rect x="404.5" y="511.5" width="373" height="356" fill="none" stroke="#6b6e86" stroke-width="1"/><g fill="#4a4aff" shape-rendering="crispEdges"><rect x="474" y="622" width="4" height="4"/><rect x="516" y="614" width="4" height="4"/><rect x="571" y="615" width="4" height="4"/><rect x="489" y="634" width="4" height="4"/><rect x="558" y="635" width="4" height="4"/><rect x="596" y="624" width="4" height="4"/><rect x="685" y="628" width="4" height="4"/><rect x="654" y="644" width="4" height="4"/><rect x="706" y="655" width="4" height="4"/><rect x="613" y="667" width="4" height="4"/><rect x="578" y="686" width="4" height="4"/><rect x="598" y="683" width="4" height="4"/><rect x="706" y="710" width="4" height="4"/><rect x="654" y="721" width="4" height="4"/><rect x="677" y="729" width="4" height="4"/><rect x="643" y="746" width="4" height="4"/><rect x="609" y="767" width="4" height="4"/><rect x="583" y="784" width="4" height="4"/><rect x="637" y="786" width="4" height="4"/><rect x="669" y="814" width="4" height="4"/><rect x="641" y="847" width="4" height="4"/><rect x="534" y="744" width="4" height="4"/><rect x="583" y="784" width="4" height="4"/><rect x="549" y="809" width="4" height="4"/><rect x="573" y="844" width="4" height="4"/></g><polyline points="454.8,509 476,623.9 501.8,689 550.6,811 566.5,868" fill="none" stroke="#fff" stroke-width="1" shape-rendering="crispEdges"/><polyline points="467.3,509 490.8,635.8 512.4,689 535.8,746.3 575,846.1 581.4,868" fill="none" stroke="#fff" stroke-width="1" shape-rendering="crispEdges"/><polyline points="497.1,509 518.2,615.6 546.1,689 584.6,785.6 608,868" fill="none" stroke="#fff" stroke-width="1" shape-rendering="crispEdges"/><polyline points="533.6,509 559.5,636.8 580.2,687.8" fill="none" stroke="#fff" stroke-width="1" shape-rendering="crispEdges"/><polyline points="549.9,509 572.6,616.6 600,685.2 615.6,729 638.6,788 662.9,868" fill="none" stroke="#fff" stroke-width="1" shape-rendering="crispEdges"/><polyline points="573.3,509 597.8,625.8 614.8,669.6 599.9,685" fill="none" stroke="#fff" stroke-width="1" shape-rendering="crispEdges"/><polyline points="599.9,685 644.7,747.9 671,815.9 685.2,868" fill="none" stroke="#fff" stroke-width="1" shape-rendering="crispEdges"/><polyline points="579.6,688.2 614.8,669.6 655.7,646.1 686.8,630.2" fill="none" stroke="#fff" stroke-width="1" shape-rendering="crispEdges"/><polyline points="580.4,689.7 615.6,671.1 656.5,647.6 687.6,631.7" fill="none" stroke="#fff" stroke-width="1" shape-rendering="crispEdges"/><polyline points="610.7,769.2 642.7,849 647.7,868" fill="none" stroke="#fff" stroke-width="1" shape-rendering="crispEdges"/><g stroke="#fff" stroke-width="1" shape-rendering="crispEdges"><line x1="476" y1="623.9" x2="518.2" y2="615.6"/><line x1="518.2" y1="615.6" x2="572.6" y2="616.6"/><line x1="476" y1="623.9" x2="490.8" y2="635.8"/><line x1="490.8" y1="635.8" x2="559.5" y2="636.8"/><line x1="572.7" y1="616.9" x2="597.8" y2="625.8"/><line x1="561.1" y1="636.9" x2="597.8" y2="625.8"/><line x1="600" y1="685.2" x2="707.9" y2="656.9"/><line x1="655.7" y1="645.8" x2="655.7" y2="723"/><line x1="535.8" y1="746.3" x2="580.3" y2="689"/><line x1="535.8" y1="746.3" x2="612" y2="732.5"/><line x1="535.8" y1="746.3" x2="610.7" y2="769.2"/><line x1="550.6" y1="811" x2="584.6" y2="785.6"/><line x1="584.6" y1="785.6" x2="638.6" y2="788"/><line x1="550.6" y1="811" x2="575" y2="846.1"/><line x1="575" y1="846.1" x2="642.7" y2="849"/><line x1="655.7" y1="723" x2="678.7" y2="730.7"/><line x1="678.7" y1="730.7" x2="707.8" y2="711.7"/><line x1="679.5" y1="732" x2="708.6" y2="713"/><line x1="644.7" y1="747.9" x2="678.7" y2="730.7"/><line x1="645.5" y1="749.3" x2="679.5" y2="732"/><line x1="610.7" y1="769.2" x2="644.7" y2="747.9"/><line x1="611.5" y1="770.5" x2="645.5" y2="749.3"/><line x1="638.6" y1="788" x2="671" y2="815.9"/><line x1="671" y1="815.9" x2="642.7" y2="849"/><line x1="585" y1="786" x2="607.3" y2="868"/><line x1="580" y1="772.8" x2="585" y2="786"/></g><polyline points="686.8,630.2 707.9,656.9 707.9,711.4" fill="none" stroke="#fff" stroke-width="1" shape-rendering="crispEdges"/><polyline points="580,738.4 612,732.5 655.8,723.3" fill="none" stroke="#fff" stroke-width="1" shape-rendering="crispEdges"/><g stroke-width="1.3"><line x1="429.6" y1="820" x2="429.6" y2="843" stroke="#0000d0"/><line x1="429.6" y1="843" x2="416.9" y2="849.3" stroke="#d00000"/><line x1="429.6" y1="843" x2="449" y2="846" stroke="#00a000"/></g><text x="428" y="817" font-size="10" fill="#0000c0">z</text><text x="416" y="845" font-size="10" fill="#e00000">x</text><text x="450" y="842" font-size="10" fill="#00b000">y</text><ellipse cx="724.6" cy="582.4" rx="35.6" ry="13.3" fill="#a0a2a7" stroke="#b4b6bb" stroke-width="1.2"/><ellipse cx="724.6" cy="581.5" rx="27.5" ry="9.3" fill="#7a7a7c" stroke="#5c5e62" stroke-width="1"/><polygon points="704.6,552.4 728,557.5 728,585.7 705.7,579" fill="#a9abaf"/><polygon points="728,557.5 743.5,551.3 742.4,575.7 728,585.7" fill="#a0a2a6"/><polygon points="704.6,552.4 724.6,546.8 743.5,551.3 728,557.5" fill="#b3b4b8"/><path d="M728 557.5 V585.7" stroke="#7a7c82" stroke-width="0.8" stroke-dasharray="2 1.5"/><path d="M704.6 552.4 L728 557.5 L743.5 551.3" fill="none" stroke="#c4c5c8" stroke-width="0.6"/><text x="716" y="572" font-size="6" fill="#6c6c6e" text-anchor="middle" font-weight="bold">RIGHT</text><text x="736" y="570" font-size="5.5" fill="#6c6c6e" text-anchor="middle" font-weight="bold">BACK</text><text x="408" y="525" font-size="10.7" fill="#d4d4d4" style="white-space:pre">[ + ] [ Perspective ] [ Wireframe + Edged Faces ]</text></svg><!-- command panel -->
<div class="a" style="left:781px;top:145px;width:183px;height:770px;background:#f0f0f0;border-left:1px solid #a8a8a8;border-right:1px solid #8a8a8a;border-bottom:1px solid #a0a0a0"></div>
<!-- tabs -->
<div class="a" style="left:782px;top:147px;width:27px;height:24px;background:linear-gradient(#f4f4f4,#dcdcdc);border:1px solid #b8b8b8;border-bottom:none"></div>
<div class="a" style="left:810px;top:145px;width:32px;height:27px;background:linear-gradient(#ffffff,#f0f0f0);border:1px solid #b8b8b8;border-bottom:none"></div>
<div class="a" style="left:842px;top:147px;width:27px;height:24px;background:linear-gradient(#f4f4f4,#dcdcdc);border:1px solid #b8b8b8;border-bottom:none"></div>
<div class="a" style="left:870px;top:147px;width:28px;height:24px;background:linear-gradient(#f4f4f4,#dcdcdc);border:1px solid #b8b8b8;border-bottom:none"></div>
<div class="a" style="left:898px;top:147px;width:29px;height:24px;background:linear-gradient(#f4f4f4,#dcdcdc);border:1px solid #b8b8b8;border-bottom:none"></div>
<div class="a" style="left:927px;top:147px;width:29px;height:24px;background:linear-gradient(#f4f4f4,#dcdcdc);border:1px solid #b8b8b8;border-bottom:none"></div>
<div class="a" style="left:782px;top:171px;width:28px;height:1px;background:#b8b8b8"></div>
<div class="a" style="left:842px;top:171px;width:114px;height:1px;background:#b8b8b8"></div>
<svg class="a" style="left:782px;top:145px" width="176" height="28" viewBox="782 145 176 28">
<!-- create star -->
<defs><radialGradient id="sg"><stop offset="0" stop-color="#fffbe8"/><stop offset="0.3" stop-color="#ffd030"/><stop offset="0.7" stop-color="#f0a040" stop-opacity="0.6"/><stop offset="1" stop-color="#e0a080" stop-opacity="0"/></radialGradient></defs>
<circle cx="796.5" cy="159.5" r="7" fill="url(#sg)"/>
<g stroke="#b84848" stroke-width="1.1"><path d="M796.5 151 V168 M788 159.5 H805 M791 154 L802 165 M802 154 L791 165"/></g>
<circle cx="796.5" cy="159.5" r="2.8" fill="#ffe050"/><circle cx="796.5" cy="159.5" r="1.3" fill="#fff"/>
<!-- modify arc -->
<path d="M818 168 V162 Q818 152 832 151 H835 V156 H832 Q823 157 823 166 V168 Z" fill="#5aa0d8" stroke="#2a6ab0" stroke-width="0.8"/>
<path d="M820 167 Q820 154 834 153.5" fill="none" stroke="#cfe6f8" stroke-width="1.2"/>
<g fill="#fff" stroke="#222" stroke-width="0.9"><rect x="815.5" y="149.5" width="3" height="3"/><rect x="834.5" y="165.5" width="3" height="3"/></g>
<path d="M817 151 H836 V167" fill="none" stroke="#444" stroke-width="0.6" stroke-dasharray="1 1"/>
<!-- hierarchy -->
<g fill="#f4f4f4" stroke="#333" stroke-width="1"><rect x="850.5" y="150.5" width="10" height="8"/><rect x="844.5" y="163.5" width="5" height="5"/><rect x="852.5" y="163.5" width="5" height="5"/><rect x="860.5" y="163.5" width="5" height="5"/></g>
<path d="M855.5 158.5 V163.5 M847 163.5 V161 H863 V163.5" fill="none" stroke="#333"/>
<!-- motion -->
<circle cx="886" cy="159" r="7" fill="#e8e8e8" stroke="#333" stroke-width="1.6"/><circle cx="886" cy="159" r="3.6" fill="none" stroke="#333" stroke-width="1.2"/><circle cx="886" cy="159" r="1.2" fill="#333"/>
<path d="M877 153 Q874 159 877 165 M875 151 Q871 159 875 167" fill="none" stroke="#888" stroke-width="0.8"/>
<!-- display -->
<rect x="902.5" y="151.5" width="20" height="13" fill="#f0f0f0" stroke="#333"/><path d="M912.5 164.5 V167 M906 167.5 H919" stroke="#333"/>
<path d="M909.5 156.5 L911 155 H916.5 V160.5 L915 162 H909.5 Z M909.5 156.5 H915 V162 M915 156.5 L916.5 155" fill="none" stroke="#333" stroke-width="0.9"/>
<!-- utilities hammer -->
<path d="M931 168 L944 155" stroke="#8a4a2a" stroke-width="2.6"/>
<path d="M939 152 L944 148 L951 154 L948 157 L945 155 L942 158 Z" fill="#555" stroke="#222" stroke-width="0.7"/>
</svg>
<!-- name field -->
<div class="a" style="left:788px;top:178px;width:146px;height:20px;background:#fff;border-top:2px solid #111;border-left:2px solid #111;border-right:1px solid #e4e4e4;border-bottom:1px solid #e4e4e4"></div>
<div class="t" style="left:792px;top:183px;font-size:10.7px;color:#111">Cylinder001</div>
<div class="a" style="left:938px;top:178px;width:17px;height:20px;background:linear-gradient(#000 0,#000 45%,#fff 45%);border-left:1px solid #888;border-top:1px solid #888"></div>
<!-- modifier list -->
<div class="a" style="left:789px;top:203px;width:168px;height:23px;background:#fafafa;border:1px solid #c6c8cc;border-radius:2px"></div>
<div class="t" style="left:792px;top:209px;font-size:10.8px;color:#111">Modifier List</div>
<svg class="a" style="left:944px;top:212px" width="9" height="6"><path d="M0 0.5h8l-4 4.5z" fill="#111"/></svg>
<!-- stack -->
<div class="a" style="left:789px;top:231px;width:166px;height:127px;background:#fff;border:1px solid #a0a0a0"></div>
<div class="a" style="left:791px;top:249px;width:144px;height:16px;background:#f0ea84"></div>
<div class="a" style="left:791px;top:328px;width:144px;height:1px;background:#888"></div>
<div class="a" style="left:791px;top:344px;width:144px;height:1px;background:#888"></div>
<div class="a" style="left:937px;top:232px;width:17px;height:125px;background:#f0f0f0"></div>
<div class="a" style="left:937px;top:252px;width:15px;height:66px;background:linear-gradient(90deg,#e8e8e8,#d8d8d8 60%,#c4c4c4);border:1px solid #a8a8a8;border-radius:2px"></div>
<div class="t" style="left:832px;top:235px;font-size:10.7px;color:#111">Edit Poly</div>
<div class="t" style="left:842px;top:251px;font-size:10.7px;color:#111">Vertex</div>
<div class="t" style="left:842px;top:267px;font-size:10.7px;color:#111">Edge</div>
<div class="t" style="left:842px;top:283px;font-size:10.7px;color:#111">Border</div>
<div class="t" style="left:842px;top:299px;font-size:10.7px;color:#111">Polygon</div>
<div class="t" style="left:842px;top:315px;font-size:10.7px;color:#111">Element</div>
<div class="t" style="left:832px;top:331px;font-size:10.7px;color:#111">Unwrap UVW</div>
<div class="a" style="left:790px;top:345px;width:147px;height:12px;overflow:hidden"><div class="t" style="left:42px;top:3px;font-size:10.7px;color:#111">UVW Mapping</div></div>
<svg class="a" style="left:789px;top:231px" width="166" height="127" viewBox="789 231 166 127">
<g fill="none" stroke="#111" stroke-width="1">
<path d="M802 242 Q799.5 240 799.5 237.5 A4.5 4.5 0 0 1 808.5 237.5 Q808.5 240 806 242 Z" fill="#fff"/><path d="M802 242.5 H806 M802 244.5 H806 M803 246.5 H805"/><path d="M802 338 Q799.5 336 799.5 333.5 A4.5 4.5 0 0 1 808.5 333.5 Q808.5 336 806 338 Z" fill="#fff"/><path d="M802 338.5 H806 M802 340.5 H806 M803 342.5 H805"/><path d="M802 353.5 Q799.5 351.5 799.5 349.0 A4.5 4.5 0 0 1 808.5 349.0 Q808.5 351.5 806 353.5 Z" fill="#fff"/><path d="M802 354.0 H806 M802 356.0 H806 M803 358.0 H805"/>
<rect x="817.5" y="236.5" width="9" height="9"/><path d="M819.5 241 H824.5"/>
</g>
<path d="M803 236 L805 238 L803 240" fill="none" stroke="#111" stroke-width="0.7"/><path d="M803 332 L805 334 L803 336" fill="none" stroke="#111" stroke-width="0.7"/><path d="M803 347.5 L805 349.5 L803 351.5" fill="none" stroke="#111" stroke-width="0.7"/>
<g fill="#111"><rect x="817" y="332" width="10" height="10"/><rect x="817" y="348" width="10" height="10"/></g>
<g stroke="#fff" stroke-width="1.4"><path d="M819 337 H825 M822 334 V340 M819 353 H825 M822 350 V356"/></g>
<g stroke="#111" stroke-dasharray="1 1"><path d="M821.5 246 V321.5 M822 257.5 H838 M822 273.5 H838 M822 289.5 H838 M822 305.5 H838 M822 321.5 H838"/></g>
<g fill="#111"><rect x="927" y="233" width="2" height="2"/><rect x="920" y="240" width="2" height="2"/><rect x="925" y="244" width="2" height="2"/><rect x="927" y="250" width="2" height="2"/><rect x="920" y="256" width="2" height="2"/><rect x="925" y="260" width="2" height="2"/></g>
<path d="M941 245 h9 l-4.5 -4z" fill="#444"/><path d="M941 347 h9 l-4.5 4z" fill="#444"/>
<g stroke="#777"><path d="M941.5 282 H948.5 M941.5 284.5 H948.5 M941.5 287 H948.5"/></g>
</svg>
<!-- stack buttons -->
<svg class="a" style="left:785px;top:360px" width="175" height="40" viewBox="785 360 175 40">
<path d="M796 373.5 H803" stroke="#111" stroke-width="1.6"/><path d="M803.5 369 V378" stroke="#111" stroke-width="1.6"/>
<path d="M804.5 370.5 L807 369 H811.5 V378 H807 L804.5 376.5 Z" fill="#fff" stroke="#111" stroke-width="1.4"/><rect x="806.5" y="371" width="3" height="5" fill="#444"/>
<g stroke="#a8a8a8"><path d="M823.5 365 V381 M858.5 365 V381 M919.5 365 V381"/></g>
<path d="M836.5 367.5 Q838.5 367.5 838.5 370 V380.5 M845.5 367.5 Q843.5 367.5 843.5 370 V380.5" fill="none" stroke="#111" stroke-width="1.7"/>
<path d="M869 367 L875 375 M883 367 L877 375 M869.5 367.5 V370 M869.5 367.5 H872 M882.5 367.5 V370 M882.5 367.5 H880" fill="none" stroke="#9a9a9a" stroke-width="1"/><circle cx="876" cy="377" r="2.2" fill="#fff" stroke="#9a9a9a"/>
<path d="M895.5 371.5 V378.5 Q899.5 381.5 903.5 378.5 V371.5 Q899.5 374 895.5 371.5 Z" fill="#fff" stroke="#111" stroke-width="1.3"/><path d="M895.5 371.5 Q897 367 901 367.5 Q904 368.5 903.5 371.5" fill="none" stroke="#111" stroke-width="1.3"/>
<rect x="929.5" y="367.5" width="14" height="13" fill="#f4f4f8" stroke="#2030a0" stroke-width="1.1"/><rect x="929.5" y="367.5" width="14" height="3" fill="#2030a0"/>
<g fill="#555"><rect x="931" y="372" width="2" height="2"/><rect x="935" y="372" width="2" height="2"/><rect x="939" y="372" width="2" height="2"/><rect x="933" y="374" width="2" height="2"/><rect x="937" y="374" width="2" height="2"/><rect x="941" y="374" width="2" height="2"/><rect x="931" y="376" width="2" height="2"/><rect x="935" y="376" width="2" height="2"/><rect x="939" y="376" width="2" height="2"/><rect x="933" y="378" width="2" height="2"/><rect x="937" y="378" width="2" height="2"/><rect x="941" y="378" width="2" height="2"/></g>
</svg>
<div class="a" style="left:786px;top:397px;width:172px;height:2px;background:#222"></div>
<!-- scroll area -->
<div class="a" style="left:954px;top:406px;width:4px;height:268px;background:#000"></div>
<div class="a" style="left:954px;top:674px;width:4px;height:234px;background:#8a8a8a"></div>
<div class="a" style="left:954px;top:905px;width:4px;height:3px;background:#000"></div>
<div class="a" style="left:788px;top:400px;width:1px;height:33px;background:#a8a8a8"></div>
<div class="a" style="left:951px;top:400px;width:1px;height:33px;background:#a8a8a8"></div>
<div class="a" style="left:788px;top:432px;width:164px;height:1px;background:#a8a8a8"></div>
<div class="a" style="left:788px;top:449px;width:164px;height:432px;border:1px solid #a8a8a8;border-top:none"></div>
<div class="a" style="left:788px;top:448px;width:4px;height:1px;background:#a8a8a8"></div>
<div class="a" style="left:948px;top:448px;width:4px;height:1px;background:#a8a8a8"></div>
<div class="btn" style="left:792px;top:440px;width:156px;height:15px;border-radius:0;border:none;border-right:2px solid #8a8a8a;border-bottom:2px solid #8a8a8a;background:linear-gradient(#fafafa,#e0e0e0 40%,#d4d4d4);line-height:15px;font-size:10.8px">Edit Geometry</div>
<svg class="a" style="left:933px;top:441px" width="12" height="13"><path d="M2 6 L6 2.5 L10 6 M2 10.5 L6 7 L10 10.5" fill="none" stroke="#666" stroke-width="2"/></svg>
<div class="btn" style="left:792px;top:888px;width:156px;height:15px;border-radius:0;border:none;border-right:2px solid #8a8a8a;border-bottom:2px solid #8a8a8a;background:linear-gradient(#fafafa,#e0e0e0 40%,#d4d4d4);line-height:16px;font-size:10.8px">Paint Deformation</div>
<svg class="a" style="left:933px;top:889px" width="12" height="13"><path d="M2 2.5 L6 6 L10 2.5 M2 7 L6 10.5 L10 7" fill="none" stroke="#666" stroke-width="2"/></svg>
<div class="a" style="left:788px;top:892px;width:3px;height:9px;border:1px solid #aaa;border-right:none"></div>
<div class="a" style="left:948px;top:892px;width:3px;height:9px;border:1px solid #aaa;border-left:none"></div>
<!-- buttons -->
<div class="btn" style="left:796px;top:407px;width:147px;height:16px">Remove Unused Map Verts</div>
<div class="btn" style="left:796px;top:462px;width:147px;height:16px">Repeat Last</div>
<div class="a" style="left:794px;top:487px;width:152px;height:46px;border:1px solid #d0dce6;border-radius:3px"></div>
<div class="t" style="left:800px;top:481px;font-size:10.7px;background:#f0f0f0;padding:0 2px;color:#111">Constraints</div>
<svg class="a" style="left:800px;top:495px" width="80" height="35" viewBox="800 495 80 35">
<g fill="#f4f4f4" stroke="#8a8a8a"><circle cx="808.5" cy="503" r="5.5"/><circle cx="868.5" cy="503" r="5.5"/><circle cx="808.5" cy="521" r="5.5"/><circle cx="868.5" cy="521" r="5.5"/></g>
<circle cx="808.5" cy="503" r="3" fill="#1a6ab0"/><circle cx="808" cy="502.3" r="1.2" fill="#8cc8f0"/>
</svg>
<div class="t" style="left:818px;top:497px;font-size:10.7px;color:#111">None</div>
<div class="t" style="left:878px;top:497px;font-size:10.7px;color:#111">Edge</div>
<div class="t" style="left:818px;top:515px;font-size:10.7px;color:#111">Face</div>
<div class="t" style="left:878px;top:515px;font-size:10.7px;color:#111">Normal</div>
<div class="a" style="left:806px;top:544px;width:12px;height:12px;background:linear-gradient(135deg,#dcdcdc,#f8f8f8);border:1px solid #8a8a8a"></div>
<div class="t" style="left:821px;top:544px;font-size:10.7px;color:#111">Preserve UVs</div>
<div class="btn" style="left:796px;top:564px;width:70px;height:16px">Create</div>
<div class="btn" style="left:873px;top:564px;width:70px;height:16px">Collapse</div>
<div class="btn" style="left:796px;top:587px;width:55px;height:16px">Attach</div>
<div class="btn" style="left:873px;top:587px;width:55px;height:16px">Detach</div>
<div class="a" style="left:794px;top:608px;width:152px;height:73px;border:1px solid #d0dce6;border-radius:3px"></div>
<div class="btn" style="left:799px;top:615px;width:67px;height:16px">Slice Plane</div>
<div class="a" style="left:872px;top:617px;width:12px;height:12px;background:linear-gradient(135deg,#dcdcdc,#f8f8f8);border:1px solid #8a8a8a"></div>
<div class="t" style="left:888px;top:617px;font-size:10.7px;color:#111">Split</div>
<div class="btn dis" style="left:799px;top:638px;width:67px;height:15px">Slice</div>
<div class="btn dis" style="left:873px;top:638px;width:67px;height:15px">Reset Plane</div>
<div class="btn" style="left:799px;top:660px;width:67px;height:16px">QuickSlice</div>
<div class="btn" style="left:873px;top:660px;width:67px;height:16px">Cut</div>
<div class="btn" style="left:796px;top:688px;width:55px;height:16px">MSmooth</div>
<div class="btn" style="left:873px;top:688px;width:55px;height:16px">Tessellate</div>
<div class="btn" style="left:796px;top:711px;width:84px;height:16px">Make Planar</div>
<div class="btn" style="left:886px;top:711px;width:15px;height:16px">X</div>
<div class="btn" style="left:907px;top:711px;width:15px;height:16px">Y</div>
<div class="btn" style="left:928px;top:711px;width:15px;height:16px">Z</div>
<div class="btn" style="left:796px;top:733px;width:70px;height:16px">View Align</div>
<div class="btn" style="left:873px;top:733px;width:70px;height:16px">Grid Align</div>
<div class="btn" style="left:834px;top:756px;width:55px;height:16px">Relax</div>
<div class="btn" style="left:796px;top:779px;width:70px;height:16px">Hide Selected</div>
<div class="btn" style="left:873px;top:779px;width:70px;height:16px">Unhide All</div>
<div class="btn" style="left:825px;top:802px;width:90px;height:16px">Hide Unselected</div>
<div class="t" style="left:797px;top:823px;font-size:10.7px;color:#111">Named Selections:</div>
<div class="btn" style="left:796px;top:839px;width:70px;height:16px">Copy</div>
<div class="btn dis" style="left:873px;top:839px;width:70px;height:16px">Paste</div>
<div class="a" style="left:800px;top:862px;width:13px;height:13px;background:#f0f0f0;border:1px solid #b0b0b0"></div>
<svg class="a" style="left:801px;top:863px" width="11" height="11"><path d="M2 6 L4.5 9 L9 1" fill="none" stroke="#b0b0b0" stroke-width="1.2"/></svg>
<div class="t" style="left:816px;top:863px;font-size:10.7px;color:#9a9a9a">Delete Isolated Vertices</div>
<!-- small settings buttons -->
<svg class="a" style="left:850px;top:540px" width="96" height="236" viewBox="850 540 96 236">
<g fill="#e4e4e4" stroke="#555" stroke-width="1">
<rect x="898.5" y="542.5" width="12" height="15" rx="2.5"/><rect x="853.5" y="587.5" width="12" height="15" rx="2.5"/><rect x="930.5" y="587.5" width="12" height="15" rx="2.5"/>
<rect x="853.5" y="688.5" width="12" height="15" rx="2.5"/><rect x="930.5" y="688.5" width="12" height="15" rx="2.5"/><rect x="891.5" y="756.5" width="12" height="15" rx="2.5"/>
</g>
<g fill="none" stroke="#111" stroke-width="1.2">
<rect x="901" y="545" width="7" height="9"/><rect x="856" y="590" width="7" height="9"/><rect x="933" y="590" width="7" height="9"/><rect x="856" y="691" width="7" height="9"/><rect x="933" y="691" width="7" height="9"/><rect x="894" y="759" width="7" height="9"/>
</g>
<g fill="#111"><rect x="901" y="545" width="7" height="2.5"/><rect x="856" y="590" width="7" height="2.5"/><rect x="933" y="590" width="7" height="2.5"/><rect x="856" y="691" width="7" height="2.5"/><rect x="933" y="691" width="7" height="2.5"/><rect x="894" y="759" width="7" height="2.5"/></g>
</svg>
<!-- time slider -->
<div class="a" style="left:20px;top:870px;width:761px;height:19px;background:linear-gradient(#ffffff 0%,#fdfdfd 40%,#eef0f3 100%)"></div>
<div class="a" style="left:20px;top:889px;width:761px;height:1px;background:#9a9a9a"></div>
<div class="a" style="left:38px;top:871px;width:123px;height:16px;border:1px solid #5a8fc4;border-radius:2px;background:linear-gradient(#d8eefa,#bfe2f6 50%,#a6d6f2)"></div>
<div class="t" style="left:82px;top:874px;font-size:11px;color:#111">0 / 100</div>
<svg class="a" style="left:24px;top:873px" width="160" height="12" viewBox="24 873 160 12">
<path d="M31 874.5 L26 878.5 L31 882.5Z" fill="#333"/><path d="M168 874.5 L173 878.5 L168 882.5Z" fill="#333"/>
</svg>
<div class="a" style="left:162px;top:871px;width:16px;height:17px;background:#f6f6f6"></div>
<svg class="a" style="left:166px;top:873px" width="10" height="12"><path d="M2 1.5 L7 5.5 L2 9.5Z" fill="#333"/></svg>
<!-- track bar -->
<div class="a" style="left:20px;top:890px;width:761px;height:25px;background:#f0f0f0"></div>
<div class="a" style="left:70px;top:890px;width:660px;height:24px;background:#c8c8c8"></div>
<div class="a" style="left:70px;top:890px;width:9px;height:24px;background:#93b3d0;border:1px solid #707880"></div>
<svg class="a" style="left:20px;top:890px" width="761" height="25" viewBox="20 890 761 25">
<g fill="none" stroke="#111">
<rect x="35" y="894.5" width="16" height="5.5" stroke-width="2"/><path d="M37 898 Q39 895.5 41 897.5 H44 Q46 896 48 897" stroke-width="1"/>
<path d="M37.5 905.5 V900.8 M35.6 902.8 L37.5 900.8 L39.4 902.8 M47.5 900.8 V905.5 M45.6 903.5 L47.5 905.5 L49.4 903.5" stroke-width="1.2"/>
<rect x="34.5" y="907" width="17" height="4" rx="1" fill="#111" stroke="none"/><path d="M36.5 909 H37.5 M39 909 H43 M44.5 909 H48 M49 909 H49.5" stroke="#fff" stroke-width="1"/>
</g>
<line x1="74.5" y1="890" x2="74.5" y2="915" stroke="#5a5e62"/><text x="74.5" y="912" font-size="11" fill="#111" text-anchor="middle" font-family="Liberation Sans">0</text><line x1="81.5" y1="890" x2="81.5" y2="901" stroke="#6a6e72"/><line x1="87.5" y1="890" x2="87.5" y2="901" stroke="#6a6e72"/><line x1="94.5" y1="890" x2="94.5" y2="901" stroke="#6a6e72"/><line x1="100.5" y1="890" x2="100.5" y2="901" stroke="#6a6e72"/><line x1="107.5" y1="890" x2="107.5" y2="901" stroke="#6a6e72"/><line x1="113.5" y1="890" x2="113.5" y2="901" stroke="#6a6e72"/><line x1="120.5" y1="890" x2="120.5" y2="901" stroke="#6a6e72"/><line x1="126.5" y1="890" x2="126.5" y2="901" stroke="#6a6e72"/><line x1="133.5" y1="890" x2="133.5" y2="901" stroke="#6a6e72"/><line x1="139.5" y1="890" x2="139.5" y2="915" stroke="#5a5e62"/><text x="139.5" y="912" font-size="11" fill="#111" text-anchor="middle" font-family="Liberation Sans">10</text><line x1="146.5" y1="890" x2="146.5" y2="901" stroke="#6a6e72"/><line x1="152.5" y1="890" x2="152.5" y2="901" stroke="#6a6e72"/><line x1="159.5" y1="890" x2="159.5" y2="901" stroke="#6a6e72"/><line x1="165.5" y1="890" x2="165.5" y2="901" stroke="#6a6e72"/><line x1="172.5" y1="890" x2="172.5" y2="901" stroke="#6a6e72"/><line x1="178.5" y1="890" x2="178.5" y2="901" stroke="#6a6e72"/><line x1="185.5" y1="890" x2="185.5" y2="901" stroke="#6a6e72"/><line x1="191.5" y1="890" x2="191.5" y2="901" stroke="#6a6e72"/><line x1="198.5" y1="890" x2="198.5" y2="901" stroke="#6a6e72"/><line x1="204.5" y1="890" x2="204.5" y2="915" stroke="#5a5e62"/><text x="204.5" y="912" font-size="11" fill="#111" text-anchor="middle" font-family="Liberation Sans">20</text><line x1="211.5" y1="890" x2="211.5" y2="901" stroke="#6a6e72"/><line x1="217.5" y1="890" x2="217.5" y2="901" stroke="#6a6e72"/><line x1="224.5" y1="890" x2="224.5" y2="901" stroke="#6a6e72"/><line x1="230.5" y1="890" x2="230.5" y2="901" stroke="#6a6e72"/><line x1="237.5" y1="890" x2="237.5" y2="901" stroke="#6a6e72"/><line x1="243.5" y1="890" x2="243.5" y2="901" stroke="#6a6e72"/><line x1="250.5" y1="890" x2="250.5" y2="901" stroke="#6a6e72"/><line x1="256.5" y1="890" x2="256.5" y2="901" stroke="#6a6e72"/><line x1="263.5" y1="890" x2="263.5" y2="901" stroke="#6a6e72"/><line x1="269.5" y1="890" x2="269.5" y2="915" stroke="#5a5e62"/><text x="269.5" y="912" font-size="11" fill="#111" text-anchor="middle" font-family="Liberation Sans">30</text><line x1="276.5" y1="890" x2="276.5" y2="901" stroke="#6a6e72"/><line x1="282.5" y1="890" x2="282.5" y2="901" stroke="#6a6e72"/><line x1="289.5" y1="890" x2="289.5" y2="901" stroke="#6a6e72"/><line x1="295.5" y1="890" x2="295.5" y2="901" stroke="#6a6e72"/><line x1="302.5" y1="890" x2="302.5" y2="901" stroke="#6a6e72"/><line x1="308.5" y1="890" x2="308.5" y2="901" stroke="#6a6e72"/><line x1="315.5" y1="890" x2="315.5" y2="901" stroke="#6a6e72"/><line x1="321.5" y1="890" x2="321.5" y2="901" stroke="#6a6e72"/><line x1="328.5" y1="890" x2="328.5" y2="901" stroke="#6a6e72"/><line x1="334.5" y1="890" x2="334.5" y2="915" stroke="#5a5e62"/><text x="334.5" y="912" font-size="11" fill="#111" text-anchor="middle" font-family="Liberation Sans">40</text><line x1="341.5" y1="890" x2="341.5" y2="901" stroke="#6a6e72"/><line x1="347.5" y1="890" x2="347.5" y2="901" stroke="#6a6e72"/><line x1="354.5" y1="890" x2="354.5" y2="901" stroke="#6a6e72"/><line x1="360.5" y1="890" x2="360.5" y2="901" stroke="#6a6e72"/><line x1="367.5" y1="890" x2="367.5" y2="901" stroke="#6a6e72"/><line x1="373.5" y1="890" x2="373.5" y2="901" stroke="#6a6e72"/><line x1="380.5" y1="890" x2="380.5" y2="901" stroke="#6a6e72"/><line x1="386.5" y1="890" x2="386.5" y2="901" stroke="#6a6e72"/><line x1="393.5" y1="890" x2="393.5" y2="901" stroke="#6a6e72"/><line x1="399.5" y1="890" x2="399.5" y2="915" stroke="#5a5e62"/><text x="399.5" y="912" font-size="11" fill="#111" text-anchor="middle" font-family="Liberation Sans">50</text><line x1="406.5" y1="890" x2="406.5" y2="901" stroke="#6a6e72"/><line x1="412.5" y1="890" x2="412.5" y2="901" stroke="#6a6e72"/><line x1="419.5" y1="890" x2="419.5" y2="901" stroke="#6a6e72"/><line x1="425.5" y1="890" x2="425.5" y2="901" stroke="#6a6e72"/><line x1="432.5" y1="890" x2="432.5" y2="901" stroke="#6a6e72"/><line x1="438.5" y1="890" x2="438.5" y2="901" stroke="#6a6e72"/><line x1="445.5" y1="890" x2="445.5" y2="901" stroke="#6a6e72"/><line x1="451.5" y1="890" x2="451.5" y2="901" stroke="#6a6e72"/><line x1="458.5" y1="890" x2="458.5" y2="901" stroke="#6a6e72"/><line x1="464.5" y1="890" x2="464.5" y2="915" stroke="#5a5e62"/><text x="464.5" y="912" font-size="11" fill="#111" text-anchor="middle" font-family="Liberation Sans">60</text><line x1="471.5" y1="890" x2="471.5" y2="901" stroke="#6a6e72"/><line x1="477.5" y1="890" x2="477.5" y2="901" stroke="#6a6e72"/><line x1="484.5" y1="890" x2="484.5" y2="901" stroke="#6a6e72"/><line x1="490.5" y1="890" x2="490.5" y2="901" stroke="#6a6e72"/><line x1="497.5" y1="890" x2="497.5" y2="901" stroke="#6a6e72"/><line x1="503.5" y1="890" x2="503.5" y2="901" stroke="#6a6e72"/><line x1="510.5" y1="890" x2="510.5" y2="901" stroke="#6a6e72"/><line x1="516.5" y1="890" x2="516.5" y2="901" stroke="#6a6e72"/><line x1="523.5" y1="890" x2="523.5" y2="901" stroke="#6a6e72"/><line x1="529.5" y1="890" x2="529.5" y2="915" stroke="#5a5e62"/><text x="529.5" y="912" font-size="11" fill="#111" text-anchor="middle" font-family="Liberation Sans">70</text><line x1="536.5" y1="890" x2="536.5" y2="901" stroke="#6a6e72"/><line x1="542.5" y1="890" x2="542.5" y2="901" stroke="#6a6e72"/><line x1="549.5" y1="890" x2="549.5" y2="901" stroke="#6a6e72"/><line x1="555.5" y1="890" x2="555.5" y2="901" stroke="#6a6e72"/><line x1="562.5" y1="890" x2="562.5" y2="901" stroke="#6a6e72"/><line x1="568.5" y1="890" x2="568.5" y2="901" stroke="#6a6e72"/><line x1="575.5" y1="890" x2="575.5" y2="901" stroke="#6a6e72"/><line x1="581.5" y1="890" x2="581.5" y2="901" stroke="#6a6e72"/><line x1="588.5" y1="890" x2="588.5" y2="901" stroke="#6a6e72"/><line x1="594.5" y1="890" x2="594.5" y2="915" stroke="#5a5e62"/><text x="594.5" y="912" font-size="11" fill="#111" text-anchor="middle" font-family="Liberation Sans">80</text><line x1="601.5" y1="890" x2="601.5" y2="901" stroke="#6a6e72"/><line x1="607.5" y1="890" x2="607.5" y2="901" stroke="#6a6e72"/><line x1="614.5" y1="890" x2="614.5" y2="901" stroke="#6a6e72"/><line x1="620.5" y1="890" x2="620.5" y2="901" stroke="#6a6e72"/><line x1="627.5" y1="890" x2="627.5" y2="901" stroke="#6a6e72"/><line x1="633.5" y1="890" x2="633.5" y2="901" stroke="#6a6e72"/><line x1="640.5" y1="890" x2="640.5" y2="901" stroke="#6a6e72"/><line x1="646.5" y1="890" x2="646.5" y2="901" stroke="#6a6e72"/><line x1="653.5" y1="890" x2="653.5" y2="901" stroke="#6a6e72"/><line x1="659.5" y1="890" x2="659.5" y2="915" stroke="#5a5e62"/><text x="659.5" y="912" font-size="11" fill="#111" text-anchor="middle" font-family="Liberation Sans">90</text><line x1="666.5" y1="890" x2="666.5" y2="901" stroke="#6a6e72"/><line x1="672.5" y1="890" x2="672.5" y2="901" stroke="#6a6e72"/><line x1="679.5" y1="890" x2="679.5" y2="901" stroke="#6a6e72"/><line x1="685.5" y1="890" x2="685.5" y2="901" stroke="#6a6e72"/><line x1="692.5" y1="890" x2="692.5" y2="901" stroke="#6a6e72"/><line x1="698.5" y1="890" x2="698.5" y2="901" stroke="#6a6e72"/><line x1="705.5" y1="890" x2="705.5" y2="901" stroke="#6a6e72"/><line x1="711.5" y1="890" x2="711.5" y2="901" stroke="#6a6e72"/><line x1="718.5" y1="890" x2="718.5" y2="901" stroke="#6a6e72"/><line x1="724.5" y1="890" x2="724.5" y2="915" stroke="#5a5e62"/><text x="724.5" y="912" font-size="11" fill="#111" text-anchor="middle" font-family="Liberation Sans">100</text></svg>
<!-- status -->
<div class="a" style="left:20px;top:915px;width:761px;height:50px;background:#f0f0f0"></div>
<div class="a" style="left:23px;top:918px;width:96px;height:21px;background:#dcc4c4;border-top:2px solid #8a8a8a;border-left:2px solid #8a8a8a;border-bottom:1px solid #fff;border-right:1px solid #fff"></div>
<div class="a" style="left:23px;top:940px;width:96px;height:22px;background:#fff;border-top:2px solid #8a8a8a;border-left:2px solid #8a8a8a;border-bottom:1px solid #e8e8e8;border-right:1px solid #e8e8e8"></div>
<div class="t" style="left:28px;top:946px;font-family:'Liberation Mono',monospace;font-size:11px;color:#111">Welcome to Mi</div>
<div class="a" style="left:124px;top:915px;width:1px;height:50px;background:#c0c0c0"></div>
<div class="a" style="left:125px;top:915px;width:1px;height:50px;background:#fff"></div>
<svg class="a" style="left:128px;top:916px" width="50" height="24" viewBox="128 916 50 24">
<path d="M135.5 928 V924.5 A3.5 3.5 0 0 1 142.5 924.5 V928" fill="none" stroke="#666" stroke-width="1.5"/><rect x="133.5" y="927.5" width="11" height="8" rx="1" fill="#e8cc94" stroke="#777"/><rect x="138.5" y="930" width="1.3" height="3" fill="#555"/>
<rect x="158.5" y="920.5" width="15" height="15" fill="#f0f0f0" stroke="#444"/><circle cx="166" cy="928" r="3.5" fill="none" stroke="#444"/><path d="M166 921 V924.5 M166 931.5 V935 M159 928 H162.5 M169.5 928 H173" stroke="#444"/>
</svg>
<div class="t" style="left:181px;top:924px;font-size:10.8px;color:#111">X:</div>
<div class="a" style="left:192px;top:919px;width:57px;height:21px;background:#f0f0f0;border-top:2px solid #111;border-left:2px solid #111;border-right:1px solid #fff;border-bottom:1px solid #fff"></div>
<div class="t" style="left:196px;top:925px;font-size:10.8px;color:#8a8a8a">-175.589</div>
<div class="t" style="left:263px;top:924px;font-size:10.8px;color:#111">Y:</div>
<div class="a" style="left:274px;top:919px;width:57px;height:21px;background:#f0f0f0;border-top:2px solid #111;border-left:2px solid #111;border-right:1px solid #fff;border-bottom:1px solid #fff"></div>
<div class="t" style="left:278px;top:925px;font-size:10.8px;color:#8a8a8a">-251.327</div>
<div class="t" style="left:345px;top:924px;font-size:10.8px;color:#111">Z:</div>
<div class="a" style="left:356px;top:919px;width:57px;height:21px;background:#f0f0f0;border-top:2px solid #111;border-left:2px solid #111;border-right:1px solid #fff;border-bottom:1px solid #fff"></div>
<div class="t" style="left:360px;top:925px;font-size:10.8px;color:#8a8a8a">0.0</div>
<div class="a" style="left:428px;top:919px;width:96px;height:21px;border-top:1px solid #a0a0a0;border-left:1px solid #a0a0a0;border-right:1px solid #fff"></div>
<div class="t" style="left:433px;top:925px;font-size:10.8px;color:#111">Grid = 10.0</div>
<div class="a" style="left:128px;top:944px;width:266px;height:21px;border-top:1px solid #a0a0a0;border-left:1px solid #a0a0a0;border-right:1px solid #a0a0a0"></div>
<div class="t" style="left:133px;top:950px;font-size:10.8px;color:#111">Select faces</div>
<div class="a" style="left:397px;top:945px;width:1px;height:20px;background:#b0b0b0"></div>
<svg class="a" style="left:398px;top:945px" width="18" height="18" viewBox="398 945 18 18">
<path d="M400.5 950.5 L403 948 H413.5 V958.5 L411 961 H400.5 Z M400.5 950.5 H411 V961 M411 950.5 L413.5 948" fill="none" stroke="#444"/><rect x="402.5" y="952.5" width="6" height="6" fill="none" stroke="#888"/>
</svg>
<div class="a" style="left:421px;top:944px;width:99px;height:21px;border-top:1px solid #a0a0a0;border-left:1px solid #a0a0a0;border-right:1px solid #fff"></div>
<div class="t" style="left:426px;top:950px;font-size:10.8px;color:#111">Add Time Tag</div>
<div class="btn" style="left:525px;top:919px;width:43px;height:42px;border-color:#888"></div>
<svg class="a" style="left:530px;top:930px" width="34" height="20" viewBox="530 930 34 20">
<circle cx="539" cy="940" r="4.5" fill="none" stroke="#111" stroke-width="2.6"/><path d="M543.5 938.5 H556 V943.5 H553.5 V941.5 H551 V943.5 H548.5 V941.5 H543.5 Z" fill="#111"/>
</svg>
<div class="btn" style="left:572px;top:919px;width:46px;height:20px;line-height:18px;font-size:10.8px">Auto Key</div>
<div class="btn" style="left:572px;top:942px;width:46px;height:19px;line-height:17px;font-size:10.8px">Set Key</div>
<div class="btn" style="left:623px;top:919px;width:114px;height:20px;text-align:left;padding-left:4px;line-height:17px;font-size:10.8px">Selected</div>
<svg class="a" style="left:724px;top:926px" width="9" height="6"><path d="M0 0.5h8l-4 4.5z" fill="#111"/></svg>
<svg class="a" style="left:623px;top:942px" width="22" height="20" viewBox="623 942 22 20">
<path d="M626 953 H640 M626 958 H640" stroke="#8080d0" stroke-width="0.9" stroke-dasharray="2 1"/><path d="M626 955 Q630 958 632 950 Q634 944 636 945 L640 950" fill="none" stroke="#d02030" stroke-width="1.4"/><path d="M641 959 h2 v-2z" fill="#111"/>
</svg>
<div class="btn" style="left:650px;top:942px;width:87px;height:19px;line-height:17px;font-size:10.8px">Key Filters...</div>
<!-- playback -->
<svg class="a" style="left:740px;top:915px" width="225" height="50" viewBox="740 915 225 50">
<g fill="#222">
<path d="M746 924 h2.5 v10 h-2.5z M749 929 L754 924 V934Z M754 929 L759 924 V934Z M760 924 h2.5 v10 h-2.5z"/>
<path d="M772 929 L778 924 V934Z M779 924 h2.2 v10 h-2.2z M782.5 924 h2.2 v10 h-2.2z M786 924 h2.2 v10 h-2.2z"/>
<path d="M797.5 923.5 L808 929 L797.5 934.5Z"/><path d="M809 937 h2 v-2z"/>
<path d="M817 924 h2.2 v10 h-2.2z M820.5 924 h2.2 v10 h-2.2z M824 924 h2.2 v10 h-2.2z M827 924 L833 929 L827 934Z"/>
<path d="M843 924 h2.5 v10 h-2.5z M846 924 L851 929 L846 934Z M851 924 L856 929 L851 934Z M857 924 h2.5 v10 h-2.5z"/>
<path d="M746 945 h1.6 v10 h-1.6z M748 950 L753 946 V954Z M755 946 L760 950 L755 954Z M761 945 h1.6 v10 h-1.6z"/>
</g>
<g stroke="#b8b8b8"><path d="M767.5 920 V938 M839.5 920 V938 M868.5 920 V938 M767.5 942 V962 M868.5 942 V962"/></g>
<!-- zoom -->
<circle cx="878" cy="928" r="5" fill="#e4ecf4" stroke="#333" stroke-width="1.4"/><path d="M881.5 931.5 L887 937" stroke="#333" stroke-width="2.4"/><path d="M885 922 h5 M887.5 919.5 v5" stroke="#333"/>
<rect x="896.5" y="922.5" width="13" height="13" fill="#f4f4f4" stroke="#333"/><path d="M896.5 929 H909.5 M903 922.5 V935.5" stroke="#333"/><circle cx="906" cy="931" r="3" fill="#e4ecf4" stroke="#333"/><path d="M908 933 L912 937" stroke="#333" stroke-width="1.6"/>
<path d="M919.5 926 V922.5 H923 M931 922.5 H934.5 V926 M934.5 932 V935.5 H931 M923 935.5 H919.5 V932" fill="none" stroke="#333"/><path d="M923.5 927.5 L925.5 925.5 H931 V931 L929 933 H923.5 Z" fill="#f0f0f0" stroke="#333" stroke-width="0.9"/><path d="M936 938 h2 v-2z" fill="#111"/>
<path d="M942.5 926.5 L945 924 H956.5 V933 L954 935.5 H942.5 Z" fill="#e6e6e6" stroke="#333"/><path d="M949.5 924 V929.5 H956.5 M942.5 929.5 H954" stroke="#333" fill="none"/><path d="M958 938 h2 v-2z" fill="#111"/>
<!-- row 2 right -->
<rect x="851.5" y="944.5" width="10" height="12" fill="#dde4ee" stroke="#333"/><rect x="853" y="946" width="6" height="4" fill="#3a5a9a"/><circle cx="861" cy="956" r="4.5" fill="#fff" stroke="#333"/><path d="M861 953.5 V956 H863" stroke="#333" fill="none" stroke-width="0.9"/>
<path d="M873 945 L888 951 L873 957" fill="none" stroke="#888" stroke-width="1.2"/><path d="M889 959 h2 v-2z" fill="#111"/>
<path d="M898 951 Q896 947 899 948 L901 951 V944 Q902 942 903.5 944 V950 V943 Q905 941 906.5 943 V950 V944 Q908 942 909.5 944 V951 V947 Q911 945 912 947 V954 Q911 960 905 960 Q900 960 898 951Z" fill="#fff" stroke="#333" stroke-width="1"/><path d="M913 960 h2 v-2z" fill="#111"/>
<ellipse cx="927" cy="952" rx="7" ry="3.5" fill="none" stroke="#333"/><path d="M927 943 V958 M920 958 L927 952 L934 954" stroke="#333" stroke-width="1.2" fill="none"/><path d="M925 945 L927 942 L929 945Z M932 952 L935 954 L931.5 956Z M919.5 956 L919 960 L922.5 958.5Z" fill="#222"/><path d="M936 960 h2 v-2z" fill="#111"/>
<rect x="941.5" y="943.5" width="11" height="11" rx="1.5" fill="#e8e8e8" stroke="#333"/><path d="M944 946 L950.5 952.5 M944 946 V949.5 M944 946 H947.5" stroke="#111" stroke-width="1.2" fill="none"/><path d="M952.5 949.5 H955.5 V958.5 H946.5 V955.5" fill="none" stroke="#333"/>
</svg>
<div class="a" style="left:769px;top:941px;width:63px;height:20px;background:#fff;border-top:2px solid #111;border-left:2px solid #111;border-right:1px solid #e4e4e4;border-bottom:1px solid #e4e4e4"></div>
<div class="t" style="left:773px;top:945px;font-size:10.8px;color:#111">0</div>
<svg class="a" style="left:834px;top:943px" width="11" height="16"><path d="M1.5 6.5 L5.5 1.5 L9.5 6.5Z M1.5 9 L5.5 14 L9.5 9Z" fill="#b8c8e8" stroke="#5a6aa8" stroke-width="0.8"/></svg>
</body></html>
